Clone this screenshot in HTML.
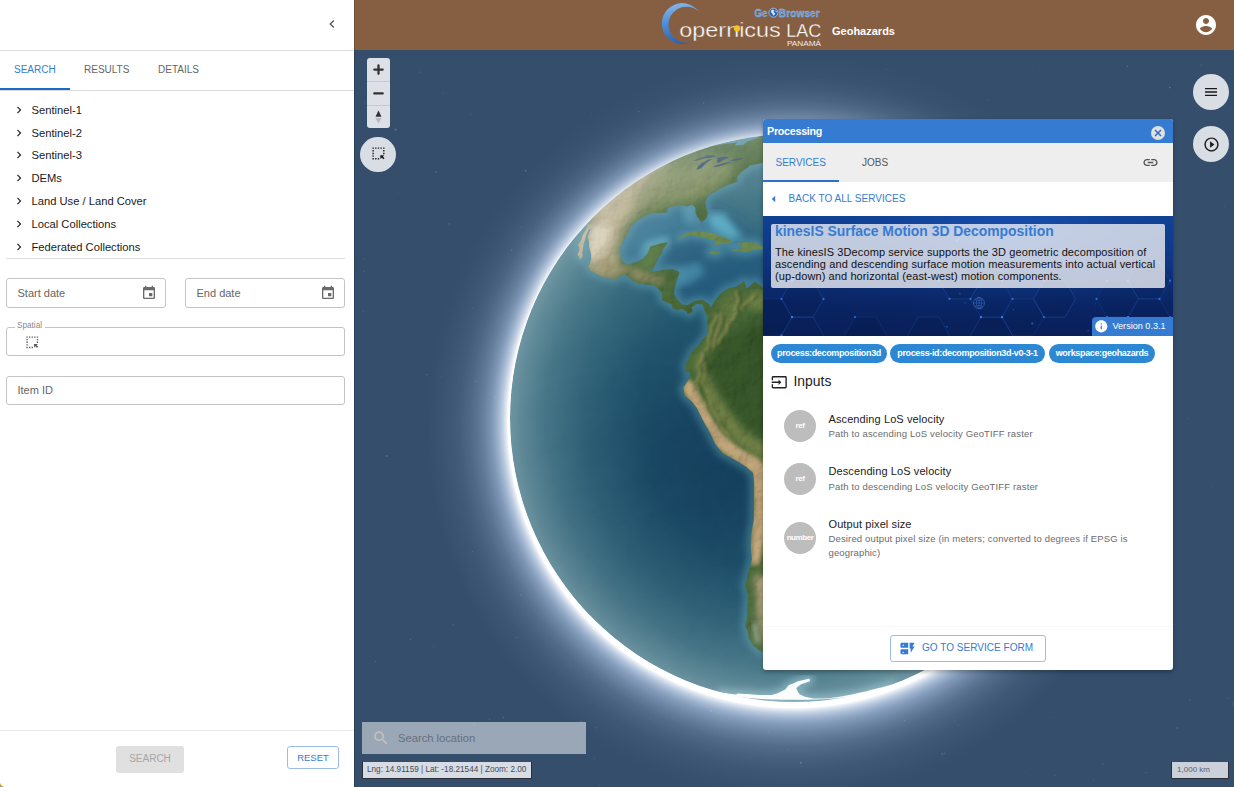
<!DOCTYPE html>
<html><head><meta charset="utf-8"><title>GeoBrowser</title>
<style>
*{box-sizing:border-box;margin:0;padding:0}
html,body{width:1234px;height:787px;overflow:hidden;background:#344e6c;font-family:"Liberation Sans",sans-serif;}
.abs{position:absolute}
#map{position:absolute;left:354px;top:49px;width:880px;height:738px;background:#344e6c;overflow:hidden}
#appbar{position:absolute;left:354px;top:0;width:880px;height:50px;background:#865e41}
#left{position:absolute;left:0;top:0;width:354px;height:787px;background:#fff;box-shadow:1px 0 0 rgba(0,0,0,.16)}
#left .hdr{position:absolute;left:0;top:0;width:353px;height:51px;border-bottom:1px solid #dedede}
.tabs{position:absolute;left:0;top:50px;width:354px;height:41px;border-bottom:1px solid #dadada}
.tab{position:absolute;top:0;height:39px;line-height:39px;font-size:10px;color:#666;white-space:nowrap}
.tab.sel{color:#367bd2}
.ind{position:absolute;left:0;top:38px;width:70px;height:2px;background:#1d69cb}
.row{position:absolute;left:0;width:353px;height:23px;font-size:11.2px;color:#1a1a1a;white-space:nowrap}
.row span{position:absolute;left:31.5px;top:0;line-height:23px}
.row svg{position:absolute;left:12px;top:4.5px}
.fld{position:absolute;border:1px solid #c4c4c4;border-radius:3px;background:#fff;font-size:11px;color:#666;white-space:nowrap}
.fld span{position:absolute;left:10.5px;top:0}
.btn{position:absolute;border-radius:3px;font-size:10px;text-align:center;white-space:nowrap}
.ctl{position:absolute;background:rgba(236,238,242,.9)}
.circ{position:absolute;width:36px;height:36px;border-radius:50%;background:#d9dde4}
#dlg{position:absolute;left:763px;top:119px;width:410px;height:551px;background:#fff;border-radius:3px;overflow:hidden;box-shadow:0 2px 4px rgba(0,0,0,.3)}
#dlg .bar{position:absolute;left:0;top:0;width:410px;height:24px;background:#367bd2}
#dlg .tabsbg{position:absolute;left:0;top:24px;width:410px;height:39px;background:#eeeeee}
.chip{position:absolute;top:225px;height:19px;line-height:19px;border-radius:10px;background:#2d88d3;color:#fff;font-size:9px;font-weight:bold;letter-spacing:-0.35px;text-align:center;white-space:nowrap}
.av{position:absolute;left:21px;width:32px;height:32px;border-radius:50%;background:#bdbdbd;color:#fff;font-size:8px;font-weight:bold;text-align:center;line-height:32px;letter-spacing:-0.45px}
.pri{position:absolute;left:65.5px;font-size:11px;color:#222;white-space:nowrap;letter-spacing:0.1px}
.sec{position:absolute;left:65.5px;font-size:9.5px;color:#6b6b6b;white-space:nowrap;letter-spacing:0.15px;line-height:14px}
</style></head><body>

<div id="map">
<svg class="abs" style="left:0;top:0" width="880" height="738" viewBox="0 0 880 738">
<defs>
<radialGradient id="glow" gradientUnits="userSpaceOnUse" cx="439.2" cy="373.5" r="369.0"><stop offset="0.7615" stop-color="#ffffff" stop-opacity="1"/><stop offset="0.7724" stop-color="#ffffff" stop-opacity="1"/><stop offset="0.7791" stop-color="#f4f8ff" stop-opacity="0.88"/><stop offset="0.7900" stop-color="#e2eeff" stop-opacity="0.72"/><stop offset="0.8022" stop-color="#d4e6ff" stop-opacity="0.57"/><stop offset="0.8184" stop-color="#c8e0ff" stop-opacity="0.405"/><stop offset="0.8374" stop-color="#c8e0ff" stop-opacity="0.275"/><stop offset="0.8564" stop-color="#c8e0ff" stop-opacity="0.185"/><stop offset="0.8780" stop-color="#c8e0ff" stop-opacity="0.115"/><stop offset="0.9051" stop-color="#c8e0ff" stop-opacity="0.062"/><stop offset="0.9377" stop-color="#c8e0ff" stop-opacity="0.028"/><stop offset="1.0000" stop-color="#c8e0ff" stop-opacity="0"/></radialGradient><radialGradient id="glow2" gradientUnits="userSpaceOnUse" cx="437" cy="389" r="364.0"><stop offset="0.7115" stop-color="#c8e0ff" stop-opacity="0.3"/><stop offset="0.7940" stop-color="#c8e0ff" stop-opacity="0.2"/><stop offset="0.8489" stop-color="#c8e0ff" stop-opacity="0.1"/><stop offset="0.9176" stop-color="#c8e0ff" stop-opacity="0.035"/><stop offset="1.0000" stop-color="#c8e0ff" stop-opacity="0"/></radialGradient>
<radialGradient id="ocean" gradientUnits="userSpaceOnUse" cx="380" cy="409" r="330">
<stop offset="0" stop-color="#0f3552"/>
<stop offset="0.2" stop-color="#123b58"/>
<stop offset="0.42" stop-color="#194a63"/>
<stop offset="0.62" stop-color="#245a6e"/>
<stop offset="0.8" stop-color="#33697a"/>
<stop offset="1" stop-color="#427684"/>
</radialGradient>
<radialGradient id="limb" gradientUnits="userSpaceOnUse" cx="446" cy="367" r="291.0">
<stop offset="0.55" stop-color="#cfdade" stop-opacity="0"/>
<stop offset="0.75" stop-color="#cfdade" stop-opacity=".07"/>
<stop offset="0.87" stop-color="#cfdade" stop-opacity=".16"/>
<stop offset="0.95" stop-color="#d3dde1" stop-opacity=".27"/>
<stop offset="1" stop-color="#d8e1e5" stop-opacity=".36"/>
</radialGradient>
<filter id="relief" x="0" y="0" width="100%" height="100%">
<feTurbulence type="fractalNoise" baseFrequency="0.055" numOctaves="4" seed="4" result="n"/>
<feDiffuseLighting in="n" surfaceScale="2.6" diffuseConstant="1.15" lighting-color="#ffffff" result="l"><feDistantLight azimuth="220" elevation="48"/></feDiffuseLighting>
<feComposite in="l" in2="SourceGraphic" operator="in"/>
</filter>
<filter id="relief2" x="0" y="0" width="100%" height="100%">
<feTurbulence type="fractalNoise" baseFrequency="0.02 0.035" numOctaves="3" seed="9" result="n"/>
<feDiffuseLighting in="n" surfaceScale="0.9" diffuseConstant="1.05" lighting-color="#ffffff" result="l"><feDistantLight azimuth="200" elevation="27"/></feDiffuseLighting>
<feComposite in="l" in2="SourceGraphic" operator="in"/>
</filter>
<clipPath id="gc"><circle cx="440" cy="369" r="284.0"/></clipPath>
<clipPath id="landclip"><path d="M267.0 133.2 L259.3 138.9 L251.9 145.0 L245.4 150.6 L239.0 156.5 L239.0 168.6 L236.1 171.9 L231.8 177.5 L233.6 177.2 L232.3 180.2 L229.2 185.2 L228.2 188.1 L227.3 191.3 L224.1 195.9 L224.7 197.5 L225.6 198.2 L225.3 202.0 L223.5 206.0 L224.8 207.1 L225.8 209.4 L226.0 210.4 L228.3 208.0 L228.8 205.0 L227.8 204.4 L228.3 202.2 L229.0 198.6 L229.5 195.3 L230.7 191.3 L231.5 187.9 L232.6 184.4 L234.9 180.3 L236.8 180.2 L235.0 184.3 L233.9 187.5 L234.5 190.3 L235.0 194.3 L235.2 198.2 L237.1 204.9 L237.3 209.4 L235.7 215.5 L234.0 216.9 L236.2 221.9 L242.1 224.5 L249.1 228.0 L255.8 229.6 L261.6 230.2 L267.8 226.4 L272.9 226.3 L279.1 232.1 L284.6 234.6 L294.0 235.7 L299.9 235.9 L303.5 238.5 L307.9 243.9 L308.0 250.9 L312.0 253.2 L317.2 254.9 L319.0 259.2 L322.7 261.1 L327.8 260.0 L332.2 262.5 L333.7 265.2 L339.0 263.0 L337.6 258.6 L342.5 254.7 L348.3 255.4 L349.8 259.3 L351.3 263.8 L354.0 267.8 L353.1 273.7 L354.5 283.2 L344.5 296.7 L337.1 303.3 L334.0 311.6 L331.6 314.9 L331.6 322.3 L336.9 323.9 L335.1 329.7 L329.3 338.3 L330.7 346.4 L337.9 352.4 L342.9 359.1 L348.7 371.0 L355.9 383.6 L361.3 394.9 L368.5 404.3 L382.2 411.6 L392.2 417.8 L399.1 424.0 L400.2 434.7 L400.1 445.3 L400.1 455.8 L399.9 470.3 L398.3 479.2 L396.8 487.9 L396.8 499.3 L397.9 510.4 L394.4 523.8 L392.8 530.5 L390.9 536.6 L394.4 546.5 L393.6 555.0 L392.9 560.5 L393.1 569.3 L390.7 576.4 L393.7 581.7 L394.7 589.4 L399.4 596.7 L405.5 602.0 L413.0 604.7 L420.6 607.3 L427.9 609.8 L434.6 606.7 L429.0 602.8 L423.1 598.6 L419.8 593.3 L424.6 585.7 L431.0 578.6 L423.6 573.6 L431.8 569.3 L433.7 560.5 L440.5 558.2 L433.5 551.2 L446.8 541.5 L457.4 540.6 L469.8 536.6 L474.5 529.0 L466.8 519.0 L478.9 520.6 L492.2 515.9 L501.4 505.0 L514.0 491.1 L523.1 479.8 L525.4 468.0 L538.5 459.4 L547.3 456.6 L555.9 453.9 L562.2 453.5 L568.8 445.3 L577.9 430.4 L581.0 421.3 L584.1 412.1 L586.5 402.9 L588.8 393.6 L597.7 381.7 L608.9 367.1 L610.3 358.6 L608.7 348.4 L599.8 343.1 L592.0 335.5 L584.0 332.2 L575.8 328.9 L560.0 325.1 L544.2 312.7 L535.3 312.1 L526.1 304.1 L522.8 294.6 L519.4 282.2 L510.0 275.7 L494.3 269.0 L478.6 265.5 L469.0 256.4 L456.3 250.4 L450.0 241.1 L437.5 242.8 L425.0 241.2 L412.6 240.3 L400.6 232.8 L392.4 239.8 L390.3 232.1 L382.2 238.0 L374.9 238.9 L366.8 244.5 L360.3 252.8 L356.9 258.8 L354.8 254.9 L348.6 250.8 L340.4 252.1 L333.8 256.0 L328.2 255.4 L325.7 252.9 L323.2 250.3 L319.9 245.1 L321.0 236.9 L323.7 228.6 L325.6 223.2 L319.3 219.9 L311.6 220.4 L303.8 222.0 L299.7 223.1 L297.5 221.9 L302.1 213.9 L304.2 208.8 L307.9 203.5 L309.3 199.6 L313.3 194.9 L312.4 193.2 L305.5 194.8 L296.6 197.6 L294.0 204.0 L290.5 208.7 L286.2 211.4 L280.5 213.4 L273.5 215.8 L268.1 212.4 L266.3 204.9 L266.0 199.5 L269.4 191.8 L274.8 183.1 L276.7 177.5 L282.3 172.1 L290.7 166.9 L298.6 163.7 L306.0 163.9 L312.9 163.2 L314.1 158.8 L320.7 157.2 L325.3 156.0 L331.4 156.5 L333.1 157.6 L338.2 155.4 L341.5 158.6 L341.4 163.2 L343.3 168.1 L345.9 171.0 L347.2 173.4 L352.0 169.9 L353.8 164.8 L352.4 159.1 L351.2 152.6 L354.7 146.2 L360.8 142.7 L368.5 138.3 L376.2 134.9 L383.7 132.4 L383.1 127.3 L388.0 122.6 L394.6 118.1 L395.1 116.5 L403.9 114.9 L412.8 112.7 L409.8 111.2 L413.9 108.0 L420.2 106.7 L426.4 105.5 L430.1 108.0 L440.4 105.5 L450.2 103.7 L453.8 101.9 L448.0 100.8 L442.3 100.8 L436.6 100.8 L434.9 98.2 L437.5 97.3 L427.8 97.0 L431.6 95.5 L436.8 95.4 L442.1 95.4 L447.4 95.4 L452.6 95.5 L457.6 94.8 L462.4 94.2 L466.1 93.1 L464.4 91.9 L457.2 90.0 L452.3 88.9 L447.5 88.0 L444.4 86.9 L437.7 85.9 L430.6 87.0 L424.0 86.9 L423.8 86.1 L419.6 86.0 L416.1 86.2 L412.6 86.5 L409.2 86.8 L405.8 87.2 L404.0 88.0 L402.2 89.5 L393.3 92.4 L391.3 94.1 L389.2 96.0 L384.9 96.2 L380.6 96.5 L383.2 93.7 L377.2 94.3 L374.1 94.6 L371.2 94.8 L367.7 95.4 L364.4 96.1 L361.2 96.8 L362.2 96.0 L365.5 94.9 L372.5 84.4 L381.4 82.4 L386.2 81.5 L391.0 80.6 L395.6 79.9 L401.2 79.1 L406.4 78.4 L403.6 78.8 L400.9 79.1 L398.1 79.5 L395.5 79.9 L392.8 80.3 L389.7 80.8 L386.6 81.4 L383.5 82.0 L380.5 82.6 L377.4 83.3 L374.4 83.9 L371.9 84.5 L369.4 85.1 L367.0 85.7 L364.7 86.3 L362.5 86.9 L360.3 87.5 L359.1 87.9 L358.0 88.2 L357.0 88.5 L356.1 88.8 L355.3 89.0 L354.6 89.2 L353.4 89.6 L352.2 90.0 L351.1 90.3 L350.1 90.6 L349.1 90.9 L348.3 91.2 L347.1 91.6 L346.0 92.0 L345.0 92.3 L344.1 92.7 L343.2 93.0 L342.4 93.2 L342.2 93.3 L342.0 93.4 L341.9 93.4 L341.9 93.4 L342.0 93.4 L342.1 93.4 L342.3 93.3 L342.6 93.2 L342.9 93.1 L343.3 92.9 L341.3 93.6 L339.3 94.4 L337.4 95.1 L335.6 95.8 L333.8 96.4 L332.2 97.1 L323.6 100.6 L315.2 104.4 L313.6 105.2 L312.2 105.9 L307.8 108.1 L303.5 110.3 L297.4 113.6 L291.6 116.9 L288.1 119.0 L284.9 121.0 L280.4 123.9 L276.1 126.7 L271.9 129.6 L267.8 132.5 L269.7 131.1 L271.8 129.7 L273.9 128.2 L276.1 126.7 L279.9 124.2 L283.8 121.7 L287.8 119.2 L292.5 116.4 L297.4 113.6 L297.0 113.8 L296.7 114.0 L296.5 114.1 L296.4 114.1 L296.4 114.2 L296.5 114.1 L294.2 115.4 L292.2 116.5 L289.4 118.2 L286.7 119.9 L283.2 122.0 L276.3 126.6 L271.2 130.1 L268.8 131.8Z M323.6 190.2 L329.0 185.9 L335.5 183.3 L344.7 182.2 L352.1 183.2 L359.7 184.3 L364.6 186.6 L371.3 188.8 L379.1 192.5 L374.4 194.3 L359.4 195.9 L362.7 191.9 L356.0 190.6 L349.5 188.4 L341.1 187.1 L334.8 186.1 L329.3 188.6Z M377.0 201.4 L382.6 202.1 L387.7 202.3 L392.2 203.6 L399.4 200.7 L408.2 199.9 L411.8 198.8 L404.9 196.6 L403.4 193.7 L393.7 193.2 L385.7 193.6 L383.3 194.7 L387.1 196.4 L388.0 199.8 L382.2 200.1Z M355.0 203.1 L362.3 202.0 L366.5 204.1 L361.9 205.5 L355.4 204.5Z M418.8 199.2 L427.6 199.5 L427.0 201.5 L418.7 201.7Z M451.2 240.6 L456.2 240.1 L456.2 244.0 L450.6 244.0Z"/></clipPath>
<filter id="b1" x="-10%" y="-10%" width="120%" height="120%"><feGaussianBlur stdDeviation="0.7"/></filter>
<filter id="b15" x="-10%" y="-10%" width="120%" height="120%"><feGaussianBlur stdDeviation="1.4"/></filter>
<filter id="b2" x="-10%" y="-10%" width="120%" height="120%"><feGaussianBlur stdDeviation="2"/></filter>
<filter id="b3" x="-10%" y="-10%" width="120%" height="120%"><feGaussianBlur stdDeviation="3.5"/></filter>
<filter id="b6" x="-10%" y="-10%" width="120%" height="120%"><feGaussianBlur stdDeviation="7"/></filter>
</defs>
<circle cx="398.1" cy="413.1" r="0.8" fill="#c9d6ea" fill-opacity="0.18"/><circle cx="752.4" cy="140.1" r="1.0" fill="#c9d6ea" fill-opacity="0.18"/><circle cx="540.3" cy="137.4" r="0.8" fill="#c9d6ea" fill-opacity="0.15"/><circle cx="79.8" cy="597.5" r="0.5" fill="#c9d6ea" fill-opacity="0.21"/><circle cx="348.6" cy="334.3" r="1.0" fill="#c9d6ea" fill-opacity="0.22"/><circle cx="548.4" cy="613.8" r="0.5" fill="#c9d6ea" fill-opacity="0.09"/><circle cx="167.4" cy="178.6" r="0.5" fill="#c9d6ea" fill-opacity="0.25"/><circle cx="287.1" cy="436.1" r="0.6" fill="#c9d6ea" fill-opacity="0.19"/><circle cx="563.5" cy="368.8" r="0.5" fill="#c9d6ea" fill-opacity="0.18"/><circle cx="244.8" cy="736.3" r="0.5" fill="#c9d6ea" fill-opacity="0.24"/><circle cx="277.4" cy="169.5" r="0.7" fill="#c9d6ea" fill-opacity="0.09"/><circle cx="495.6" cy="79.7" r="0.5" fill="#c9d6ea" fill-opacity="0.27"/><circle cx="340.1" cy="707.0" r="0.5" fill="#c9d6ea" fill-opacity="0.13"/><circle cx="815.8" cy="38.6" r="0.8" fill="#c9d6ea" fill-opacity="0.30"/><circle cx="349.7" cy="53.9" r="0.6" fill="#c9d6ea" fill-opacity="0.25"/><circle cx="237.4" cy="64.3" r="0.7" fill="#c9d6ea" fill-opacity="0.08"/><circle cx="360.8" cy="681.1" r="0.6" fill="#c9d6ea" fill-opacity="0.13"/><circle cx="88.9" cy="44.2" r="0.8" fill="#c9d6ea" fill-opacity="0.12"/><circle cx="492.2" cy="330.2" r="0.6" fill="#c9d6ea" fill-opacity="0.30"/><circle cx="677.2" cy="309.4" r="0.8" fill="#c9d6ea" fill-opacity="0.11"/><circle cx="370.3" cy="157.1" r="0.7" fill="#c9d6ea" fill-opacity="0.27"/><circle cx="857.9" cy="437.4" r="0.5" fill="#c9d6ea" fill-opacity="0.13"/><circle cx="347.0" cy="630.5" r="1.0" fill="#c9d6ea" fill-opacity="0.10"/><circle cx="870.6" cy="157.4" r="0.7" fill="#c9d6ea" fill-opacity="0.08"/><circle cx="537.1" cy="612.8" r="0.8" fill="#c9d6ea" fill-opacity="0.10"/><circle cx="79.3" cy="430.1" r="0.6" fill="#c9d6ea" fill-opacity="0.08"/><circle cx="324.4" cy="459.1" r="0.6" fill="#c9d6ea" fill-opacity="0.29"/><circle cx="425.7" cy="424.0" r="0.8" fill="#c9d6ea" fill-opacity="0.12"/><circle cx="135.6" cy="670.4" r="1.0" fill="#c9d6ea" fill-opacity="0.13"/><circle cx="167.0" cy="545.7" r="1.0" fill="#c9d6ea" fill-opacity="0.12"/><circle cx="836.1" cy="651.1" r="1.0" fill="#c9d6ea" fill-opacity="0.10"/><circle cx="41.7" cy="80.5" r="1.0" fill="#c9d6ea" fill-opacity="0.29"/><circle cx="209.8" cy="520.0" r="0.7" fill="#c9d6ea" fill-opacity="0.17"/><circle cx="796.2" cy="362.4" r="1.0" fill="#c9d6ea" fill-opacity="0.12"/><circle cx="633.9" cy="50.8" r="0.6" fill="#c9d6ea" fill-opacity="0.19"/><circle cx="575.1" cy="454.5" r="0.5" fill="#c9d6ea" fill-opacity="0.14"/><circle cx="807.3" cy="150.5" r="0.5" fill="#c9d6ea" fill-opacity="0.10"/><circle cx="362.1" cy="183.8" r="0.5" fill="#c9d6ea" fill-opacity="0.12"/><circle cx="324.5" cy="422.3" r="0.6" fill="#c9d6ea" fill-opacity="0.10"/><circle cx="121.8" cy="332.4" r="0.7" fill="#c9d6ea" fill-opacity="0.22"/><circle cx="608.3" cy="431.3" r="0.6" fill="#c9d6ea" fill-opacity="0.21"/><circle cx="812.8" cy="350.4" r="0.7" fill="#c9d6ea" fill-opacity="0.23"/><circle cx="847.2" cy="15.7" r="0.5" fill="#c9d6ea" fill-opacity="0.19"/><circle cx="642.8" cy="235.4" r="0.5" fill="#c9d6ea" fill-opacity="0.10"/><circle cx="480.6" cy="543.9" r="0.6" fill="#c9d6ea" fill-opacity="0.25"/><circle cx="805.2" cy="259.7" r="0.8" fill="#c9d6ea" fill-opacity="0.28"/><circle cx="766.6" cy="307.9" r="0.5" fill="#c9d6ea" fill-opacity="0.27"/><circle cx="504.1" cy="461.2" r="0.8" fill="#c9d6ea" fill-opacity="0.16"/><circle cx="11.0" cy="53.3" r="0.5" fill="#c9d6ea" fill-opacity="0.22"/><circle cx="874.1" cy="649.3" r="0.7" fill="#c9d6ea" fill-opacity="0.17"/><circle cx="646.8" cy="428.7" r="0.8" fill="#c9d6ea" fill-opacity="0.18"/><circle cx="476.3" cy="382.8" r="1.0" fill="#c9d6ea" fill-opacity="0.09"/><circle cx="529.1" cy="354.9" r="0.6" fill="#c9d6ea" fill-opacity="0.29"/><circle cx="99.3" cy="575.6" r="0.8" fill="#c9d6ea" fill-opacity="0.14"/><circle cx="10.0" cy="222.2" r="1.0" fill="#c9d6ea" fill-opacity="0.12"/><circle cx="149.3" cy="668.4" r="0.8" fill="#c9d6ea" fill-opacity="0.19"/><circle cx="212.5" cy="298.7" r="0.7" fill="#c9d6ea" fill-opacity="0.12"/><circle cx="379.2" cy="594.8" r="0.6" fill="#c9d6ea" fill-opacity="0.27"/><circle cx="338.3" cy="430.3" r="0.7" fill="#c9d6ea" fill-opacity="0.13"/><circle cx="118.4" cy="258.8" r="0.5" fill="#c9d6ea" fill-opacity="0.24"/><circle cx="836.0" cy="204.3" r="0.6" fill="#c9d6ea" fill-opacity="0.10"/><circle cx="414.8" cy="683.2" r="0.8" fill="#c9d6ea" fill-opacity="0.16"/><circle cx="457.6" cy="496.0" r="1.0" fill="#c9d6ea" fill-opacity="0.18"/><circle cx="65.7" cy="23.2" r="1.0" fill="#c9d6ea" fill-opacity="0.09"/><circle cx="623.6" cy="421.1" r="0.7" fill="#c9d6ea" fill-opacity="0.22"/><circle cx="496.4" cy="473.0" r="0.8" fill="#c9d6ea" fill-opacity="0.18"/><circle cx="21.8" cy="612.3" r="0.6" fill="#c9d6ea" fill-opacity="0.25"/><circle cx="701.2" cy="726.2" r="0.5" fill="#c9d6ea" fill-opacity="0.18"/><circle cx="554.4" cy="483.4" r="0.7" fill="#c9d6ea" fill-opacity="0.29"/><circle cx="602.4" cy="147.1" r="0.8" fill="#c9d6ea" fill-opacity="0.14"/><circle cx="628.5" cy="557.2" r="1.0" fill="#c9d6ea" fill-opacity="0.24"/><circle cx="157.6" cy="201.0" r="0.7" fill="#c9d6ea" fill-opacity="0.20"/><circle cx="833.2" cy="369.3" r="0.6" fill="#c9d6ea" fill-opacity="0.17"/><circle cx="696.9" cy="668.8" r="0.5" fill="#c9d6ea" fill-opacity="0.17"/><circle cx="785.5" cy="286.3" r="0.8" fill="#c9d6ea" fill-opacity="0.18"/><circle cx="550.5" cy="671.6" r="0.8" fill="#c9d6ea" fill-opacity="0.20"/><circle cx="574.4" cy="371.0" r="0.7" fill="#c9d6ea" fill-opacity="0.18"/><circle cx="573.2" cy="151.2" r="0.5" fill="#c9d6ea" fill-opacity="0.13"/><circle cx="792.0" cy="723.6" r="0.7" fill="#c9d6ea" fill-opacity="0.20"/><circle cx="695.9" cy="236.5" r="0.5" fill="#c9d6ea" fill-opacity="0.16"/><circle cx="72.8" cy="325.4" r="1.0" fill="#c9d6ea" fill-opacity="0.17"/><circle cx="242.2" cy="678.8" r="0.6" fill="#c9d6ea" fill-opacity="0.26"/><circle cx="56.4" cy="590.3" r="0.6" fill="#c9d6ea" fill-opacity="0.20"/><circle cx="604.2" cy="676.0" r="0.8" fill="#c9d6ea" fill-opacity="0.11"/><circle cx="454.5" cy="534.0" r="0.8" fill="#c9d6ea" fill-opacity="0.29"/><circle cx="433.5" cy="700.5" r="0.5" fill="#c9d6ea" fill-opacity="0.25"/><circle cx="386.7" cy="412.4" r="1.0" fill="#c9d6ea" fill-opacity="0.22"/><circle cx="460.0" cy="622.6" r="1.0" fill="#c9d6ea" fill-opacity="0.14"/><circle cx="590.7" cy="704.6" r="1.0" fill="#c9d6ea" fill-opacity="0.13"/><circle cx="748.7" cy="714.7" r="1.0" fill="#c9d6ea" fill-opacity="0.14"/><circle cx="437.9" cy="303.4" r="0.5" fill="#c9d6ea" fill-opacity="0.19"/><circle cx="532.6" cy="20.5" r="0.5" fill="#c9d6ea" fill-opacity="0.19"/><circle cx="352.5" cy="591.2" r="1.0" fill="#c9d6ea" fill-opacity="0.11"/><circle cx="82.0" cy="123.1" r="1.0" fill="#c9d6ea" fill-opacity="0.18"/><circle cx="810.3" cy="590.7" r="0.8" fill="#c9d6ea" fill-opacity="0.14"/><circle cx="416.4" cy="93.7" r="0.8" fill="#c9d6ea" fill-opacity="0.28"/><circle cx="823.4" cy="679.0" r="1.0" fill="#c9d6ea" fill-opacity="0.15"/><circle cx="168.5" cy="456.0" r="0.7" fill="#c9d6ea" fill-opacity="0.11"/><circle cx="685.8" cy="16.8" r="0.6" fill="#c9d6ea" fill-opacity="0.11"/><circle cx="10.4" cy="209.7" r="0.7" fill="#c9d6ea" fill-opacity="0.13"/><circle cx="439.0" cy="368.8" r="1.0" fill="#c9d6ea" fill-opacity="0.11"/><circle cx="449.2" cy="184.9" r="0.6" fill="#c9d6ea" fill-opacity="0.23"/><circle cx="773.3" cy="17.2" r="0.8" fill="#c9d6ea" fill-opacity="0.26"/><circle cx="541.9" cy="397.2" r="1.0" fill="#c9d6ea" fill-opacity="0.22"/><circle cx="466.1" cy="628.2" r="1.0" fill="#c9d6ea" fill-opacity="0.21"/><circle cx="120.1" cy="675.1" r="0.7" fill="#c9d6ea" fill-opacity="0.28"/><circle cx="278.0" cy="232.5" r="0.6" fill="#c9d6ea" fill-opacity="0.13"/><circle cx="878.6" cy="655.0" r="0.6" fill="#c9d6ea" fill-opacity="0.28"/><circle cx="116.6" cy="65.1" r="0.8" fill="#c9d6ea" fill-opacity="0.10"/><circle cx="732.3" cy="311.2" r="0.6" fill="#c9d6ea" fill-opacity="0.12"/><circle cx="552.6" cy="589.6" r="0.5" fill="#c9d6ea" fill-opacity="0.12"/><circle cx="600.5" cy="672.6" r="0.7" fill="#c9d6ea" fill-opacity="0.11"/><circle cx="445.0" cy="559.5" r="1.0" fill="#c9d6ea" fill-opacity="0.30"/><circle cx="733.0" cy="592.5" r="0.8" fill="#c9d6ea" fill-opacity="0.10"/><circle cx="32.9" cy="407.1" r="1.0" fill="#c9d6ea" fill-opacity="0.28"/><circle cx="423.5" cy="139.9" r="0.5" fill="#c9d6ea" fill-opacity="0.12"/><circle cx="739.4" cy="730.8" r="0.5" fill="#c9d6ea" fill-opacity="0.21"/><circle cx="118.3" cy="502.6" r="0.5" fill="#c9d6ea" fill-opacity="0.25"/><circle cx="287.6" cy="344.6" r="1.0" fill="#c9d6ea" fill-opacity="0.16"/><circle cx="184.9" cy="275.4" r="0.5" fill="#c9d6ea" fill-opacity="0.27"/><circle cx="159.5" cy="335.0" r="0.7" fill="#c9d6ea" fill-opacity="0.17"/><circle cx="171.7" cy="121.8" r="1.0" fill="#c9d6ea" fill-opacity="0.25"/><circle cx="284.9" cy="62.6" r="0.8" fill="#c9d6ea" fill-opacity="0.21"/><circle cx="168.0" cy="431.4" r="0.7" fill="#c9d6ea" fill-opacity="0.26"/><circle cx="227.3" cy="672.5" r="0.6" fill="#c9d6ea" fill-opacity="0.26"/><circle cx="357.0" cy="661.7" r="1.0" fill="#c9d6ea" fill-opacity="0.23"/><circle cx="675.2" cy="564.7" r="0.8" fill="#c9d6ea" fill-opacity="0.13"/><circle cx="162.6" cy="588.4" r="0.7" fill="#c9d6ea" fill-opacity="0.18"/><circle cx="9.3" cy="262.5" r="1.0" fill="#c9d6ea" fill-opacity="0.09"/><circle cx="240.2" cy="709.5" r="0.7" fill="#c9d6ea" fill-opacity="0.15"/><circle cx="580.6" cy="420.3" r="1.0" fill="#c9d6ea" fill-opacity="0.10"/><circle cx="452.9" cy="367.2" r="0.6" fill="#c9d6ea" fill-opacity="0.23"/><circle cx="670.3" cy="723.3" r="0.5" fill="#c9d6ea" fill-opacity="0.11"/><circle cx="95.1" cy="174.9" r="0.8" fill="#c9d6ea" fill-opacity="0.17"/><circle cx="44.4" cy="144.2" r="0.8" fill="#c9d6ea" fill-opacity="0.08"/><circle cx="227.5" cy="203.5" r="0.7" fill="#c9d6ea" fill-opacity="0.20"/><circle cx="446.9" cy="713.7" r="1.0" fill="#c9d6ea" fill-opacity="0.27"/><circle cx="87.7" cy="327.9" r="0.5" fill="#c9d6ea" fill-opacity="0.20"/><circle cx="588.2" cy="705.0" r="0.8" fill="#c9d6ea" fill-opacity="0.28"/><circle cx="140.7" cy="348.2" r="0.6" fill="#c9d6ea" fill-opacity="0.27"/>
<circle cx="437" cy="389" r="364.0" fill="url(#glow2)"/><circle cx="439.2" cy="373.5" r="369.0" fill="url(#glow)"/>
<g clip-path="url(#gc)">
<circle cx="440" cy="369" r="284.0" fill="url(#ocean)"/>
<!-- darker deep pacific patch -->
<g style="mix-blend-mode:soft-light" opacity=".35"><circle cx="440" cy="369" r="284.0" fill="#fff" filter="url(#relief2)"/></g>
<!-- caribbean / gulf brighter water -->
<path d="M280.0 167.4 L286.1 165.4 L292.5 163.4 L299.0 161.6 L305.6 159.8 L312.5 158.0 L319.5 156.4 L326.6 154.8 L333.9 153.2 L341.3 151.8 L348.8 150.4 L354.6 153.3 L360.8 156.3 L367.3 159.5 L374.1 162.9 L383.1 170.5 L392.9 178.7 L401.9 180.6 L411.2 182.5 L420.5 184.6 L430.0 186.8 L439.6 189.2 L449.3 191.6 L451.4 199.0 L453.5 206.6 L455.7 214.4 L457.9 222.4 L460.1 230.6 L462.4 239.0 L452.8 240.4 L443.2 241.9 L433.5 243.5 L423.9 245.1 L414.2 246.9 L404.5 248.7 L394.9 250.5 L385.3 252.5 L375.7 254.5 L366.3 256.6 L356.9 258.8 L346.6 258.1 L336.6 257.5 L326.7 257.0 L317.1 256.6 L309.8 249.1 L303.0 241.8 L296.6 234.8 L290.6 228.1 L283.5 226.3 L276.8 224.6 L270.4 223.0 L264.2 221.5 L258.4 220.1 L260.7 212.8 L263.1 205.7 L265.6 198.8 L268.2 192.1 L271.0 185.6 L273.9 179.3 L276.9 173.2Z" fill="#1d5a86" fill-opacity=".5" filter="url(#b6)"/>
<path d="M279.6 174.2 L286.9 171.5 L294.4 168.8 L302.1 166.3 L309.9 163.8 L316.4 162.6 L323.1 161.4 L329.9 160.3 L336.8 159.3 L336.6 167.0 L336.6 175.1 L325.0 183.0 L313.3 191.3 L301.8 199.9 L290.5 208.7 L281.3 210.5 L272.5 212.3 L270.2 204.0 L268.4 196.1 L272.0 188.5 L275.8 181.2Z" fill="#3f8ba8" fill-opacity=".45" filter="url(#b6)"/>
<!-- shallow shelves -->
<path d="M267.0 133.2 L259.3 138.9 L251.9 145.0 L245.4 150.6 L239.0 156.5 L239.0 168.6 L236.1 171.9 L231.8 177.5 L233.6 177.2 L232.3 180.2 L229.2 185.2 L228.2 188.1 L227.3 191.3 L224.1 195.9 L224.7 197.5 L225.6 198.2 L225.3 202.0 L223.5 206.0 L224.8 207.1 L225.8 209.4 L226.0 210.4 L228.3 208.0 L228.8 205.0 L227.8 204.4 L228.3 202.2 L229.0 198.6 L229.5 195.3 L230.7 191.3 L231.5 187.9 L232.6 184.4 L234.9 180.3 L236.8 180.2 L235.0 184.3 L233.9 187.5 L234.5 190.3 L235.0 194.3 L235.2 198.2 L237.1 204.9 L237.3 209.4 L235.7 215.5 L234.0 216.9 L236.2 221.9 L242.1 224.5 L249.1 228.0 L255.8 229.6 L261.6 230.2 L267.8 226.4 L272.9 226.3 L279.1 232.1 L284.6 234.6 L294.0 235.7 L299.9 235.9 L303.5 238.5 L307.9 243.9 L308.0 250.9 L312.0 253.2 L317.2 254.9 L319.0 259.2 L322.7 261.1 L327.8 260.0 L332.2 262.5 L333.7 265.2 L339.0 263.0 L337.6 258.6 L342.5 254.7 L348.3 255.4 L349.8 259.3 L351.3 263.8 L354.0 267.8 L353.1 273.7 L354.5 283.2 L344.5 296.7 L337.1 303.3 L334.0 311.6 L331.6 314.9 L331.6 322.3 L336.9 323.9 L335.1 329.7 L329.3 338.3 L330.7 346.4 L337.9 352.4 L342.9 359.1 L348.7 371.0 L355.9 383.6 L361.3 394.9 L368.5 404.3 L382.2 411.6 L392.2 417.8 L399.1 424.0 L400.2 434.7 L400.1 445.3 L400.1 455.8 L399.9 470.3 L398.3 479.2 L396.8 487.9 L396.8 499.3 L397.9 510.4 L394.4 523.8 L392.8 530.5 L390.9 536.6 L394.4 546.5 L393.6 555.0 L392.9 560.5 L393.1 569.3 L390.7 576.4 L393.7 581.7 L394.7 589.4 L399.4 596.7 L405.5 602.0 L413.0 604.7 L420.6 607.3 L427.9 609.8 L434.6 606.7 L429.0 602.8 L423.1 598.6 L419.8 593.3 L424.6 585.7 L431.0 578.6 L423.6 573.6 L431.8 569.3 L433.7 560.5 L440.5 558.2 L433.5 551.2 L446.8 541.5 L457.4 540.6 L469.8 536.6 L474.5 529.0 L466.8 519.0 L478.9 520.6 L492.2 515.9 L501.4 505.0 L514.0 491.1 L523.1 479.8 L525.4 468.0 L538.5 459.4 L547.3 456.6 L555.9 453.9 L562.2 453.5 L568.8 445.3 L577.9 430.4 L581.0 421.3 L584.1 412.1 L586.5 402.9 L588.8 393.6 L597.7 381.7 L608.9 367.1 L610.3 358.6 L608.7 348.4 L599.8 343.1 L592.0 335.5 L584.0 332.2 L575.8 328.9 L560.0 325.1 L544.2 312.7 L535.3 312.1 L526.1 304.1 L522.8 294.6 L519.4 282.2 L510.0 275.7 L494.3 269.0 L478.6 265.5 L469.0 256.4 L456.3 250.4 L450.0 241.1 L437.5 242.8 L425.0 241.2 L412.6 240.3 L400.6 232.8 L392.4 239.8 L390.3 232.1 L382.2 238.0 L374.9 238.9 L366.8 244.5 L360.3 252.8 L356.9 258.8 L354.8 254.9 L348.6 250.8 L340.4 252.1 L333.8 256.0 L328.2 255.4 L325.7 252.9 L323.2 250.3 L319.9 245.1 L321.0 236.9 L323.7 228.6 L325.6 223.2 L319.3 219.9 L311.6 220.4 L303.8 222.0 L299.7 223.1 L297.5 221.9 L302.1 213.9 L304.2 208.8 L307.9 203.5 L309.3 199.6 L313.3 194.9 L312.4 193.2 L305.5 194.8 L296.6 197.6 L294.0 204.0 L290.5 208.7 L286.2 211.4 L280.5 213.4 L273.5 215.8 L268.1 212.4 L266.3 204.9 L266.0 199.5 L269.4 191.8 L274.8 183.1 L276.7 177.5 L282.3 172.1 L290.7 166.9 L298.6 163.7 L306.0 163.9 L312.9 163.2 L314.1 158.8 L320.7 157.2 L325.3 156.0 L331.4 156.5 L333.1 157.6 L338.2 155.4 L341.5 158.6 L341.4 163.2 L343.3 168.1 L345.9 171.0 L347.2 173.4 L352.0 169.9 L353.8 164.8 L352.4 159.1 L351.2 152.6 L354.7 146.2 L360.8 142.7 L368.5 138.3 L376.2 134.9 L383.7 132.4 L383.1 127.3 L388.0 122.6 L394.6 118.1 L395.1 116.5 L403.9 114.9 L412.8 112.7 L409.8 111.2 L413.9 108.0 L420.2 106.7 L426.4 105.5 L430.1 108.0 L440.4 105.5 L450.2 103.7 L453.8 101.9 L448.0 100.8 L442.3 100.8 L436.6 100.8 L434.9 98.2 L437.5 97.3 L427.8 97.0 L431.6 95.5 L436.8 95.4 L442.1 95.4 L447.4 95.4 L452.6 95.5 L457.6 94.8 L462.4 94.2 L466.1 93.1 L464.4 91.9 L457.2 90.0 L452.3 88.9 L447.5 88.0 L444.4 86.9 L437.7 85.9 L430.6 87.0 L424.0 86.9 L423.8 86.1 L419.6 86.0 L416.1 86.2 L412.6 86.5 L409.2 86.8 L405.8 87.2 L404.0 88.0 L402.2 89.5 L393.3 92.4 L391.3 94.1 L389.2 96.0 L384.9 96.2 L380.6 96.5 L383.2 93.7 L377.2 94.3 L374.1 94.6 L371.2 94.8 L367.7 95.4 L364.4 96.1 L361.2 96.8 L362.2 96.0 L365.5 94.9 L372.5 84.4 L381.4 82.4 L386.2 81.5 L391.0 80.6 L395.6 79.9 L401.2 79.1 L406.4 78.4 L403.6 78.8 L400.9 79.1 L398.1 79.5 L395.5 79.9 L392.8 80.3 L389.7 80.8 L386.6 81.4 L383.5 82.0 L380.5 82.6 L377.4 83.3 L374.4 83.9 L371.9 84.5 L369.4 85.1 L367.0 85.7 L364.7 86.3 L362.5 86.9 L360.3 87.5 L359.1 87.9 L358.0 88.2 L357.0 88.5 L356.1 88.8 L355.3 89.0 L354.6 89.2 L353.4 89.6 L352.2 90.0 L351.1 90.3 L350.1 90.6 L349.1 90.9 L348.3 91.2 L347.1 91.6 L346.0 92.0 L345.0 92.3 L344.1 92.7 L343.2 93.0 L342.4 93.2 L342.2 93.3 L342.0 93.4 L341.9 93.4 L341.9 93.4 L342.0 93.4 L342.1 93.4 L342.3 93.3 L342.6 93.2 L342.9 93.1 L343.3 92.9 L341.3 93.6 L339.3 94.4 L337.4 95.1 L335.6 95.8 L333.8 96.4 L332.2 97.1 L323.6 100.6 L315.2 104.4 L313.6 105.2 L312.2 105.9 L307.8 108.1 L303.5 110.3 L297.4 113.6 L291.6 116.9 L288.1 119.0 L284.9 121.0 L280.4 123.9 L276.1 126.7 L271.9 129.6 L267.8 132.5 L269.7 131.1 L271.8 129.7 L273.9 128.2 L276.1 126.7 L279.9 124.2 L283.8 121.7 L287.8 119.2 L292.5 116.4 L297.4 113.6 L297.0 113.8 L296.7 114.0 L296.5 114.1 L296.4 114.1 L296.4 114.2 L296.5 114.1 L294.2 115.4 L292.2 116.5 L289.4 118.2 L286.7 119.9 L283.2 122.0 L276.3 126.6 L271.2 130.1 L268.8 131.8Z M323.6 190.2 L329.0 185.9 L335.5 183.3 L344.7 182.2 L352.1 183.2 L359.7 184.3 L364.6 186.6 L371.3 188.8 L379.1 192.5 L374.4 194.3 L359.4 195.9 L362.7 191.9 L356.0 190.6 L349.5 188.4 L341.1 187.1 L334.8 186.1 L329.3 188.6Z M377.0 201.4 L382.6 202.1 L387.7 202.3 L392.2 203.6 L399.4 200.7 L408.2 199.9 L411.8 198.8 L404.9 196.6 L403.4 193.7 L393.7 193.2 L385.7 193.6 L383.3 194.7 L387.1 196.4 L388.0 199.8 L382.2 200.1Z M355.0 203.1 L362.3 202.0 L366.5 204.1 L361.9 205.5 L355.4 204.5Z M418.8 199.2 L427.6 199.5 L427.0 201.5 L418.7 201.7Z M451.2 240.6 L456.2 240.1 L456.2 244.0 L450.6 244.0Z" fill="none" stroke="#5fa5b8" stroke-opacity=".5" stroke-width="8" stroke-linejoin="round" filter="url(#b3)"/>
<path d="M290.8 193.1 L298.5 190.9 L306.5 188.8 L314.6 186.7 L314.6 195.6 L305.4 199.3 L296.5 203.1 L285.9 209.6 L288.2 201.2Z" fill="#62a9bf" fill-opacity=".7" filter="url(#b3)"/>
<path d="M356.3 164.6 L368.9 163.3 L375.1 171.1 L381.9 179.4 L389.1 188.2 L375.1 189.0 L367.6 185.0 L360.3 181.1 L353.8 175.2Z" fill="#63c0d6" fill-opacity=".75" filter="url(#b3)"/>
<path d="M324.8 218.2 L334.5 215.8 L344.2 213.6 L351.3 223.3 L335.9 235.3 L322.1 236.8 L323.4 227.4Z" fill="#4f9bb8" fill-opacity=".6" filter="url(#b3)"/>
<path d="M329.1 156.8 L340.5 155.1 L340.6 161.6 L340.8 168.4 L343.6 176.3 L331.7 175.7 L330.0 169.9 L328.5 164.3Z" fill="#62a9bf" fill-opacity=".55" filter="url(#b3)"/>
<!-- land -->
<g filter="url(#b1)">
<path d="M267.0 133.2 L259.3 138.9 L251.9 145.0 L245.4 150.6 L239.0 156.5 L239.0 168.6 L236.1 171.9 L231.8 177.5 L233.6 177.2 L232.3 180.2 L229.2 185.2 L228.2 188.1 L227.3 191.3 L224.1 195.9 L224.7 197.5 L225.6 198.2 L225.3 202.0 L223.5 206.0 L224.8 207.1 L225.8 209.4 L226.0 210.4 L228.3 208.0 L228.8 205.0 L227.8 204.4 L228.3 202.2 L229.0 198.6 L229.5 195.3 L230.7 191.3 L231.5 187.9 L232.6 184.4 L234.9 180.3 L236.8 180.2 L235.0 184.3 L233.9 187.5 L234.5 190.3 L235.0 194.3 L235.2 198.2 L237.1 204.9 L237.3 209.4 L235.7 215.5 L234.0 216.9 L236.2 221.9 L242.1 224.5 L249.1 228.0 L255.8 229.6 L261.6 230.2 L267.8 226.4 L272.9 226.3 L279.1 232.1 L284.6 234.6 L294.0 235.7 L299.9 235.9 L303.5 238.5 L307.9 243.9 L308.0 250.9 L312.0 253.2 L317.2 254.9 L319.0 259.2 L322.7 261.1 L327.8 260.0 L332.2 262.5 L333.7 265.2 L339.0 263.0 L337.6 258.6 L342.5 254.7 L348.3 255.4 L349.8 259.3 L351.3 263.8 L354.0 267.8 L353.1 273.7 L354.5 283.2 L344.5 296.7 L337.1 303.3 L334.0 311.6 L331.6 314.9 L331.6 322.3 L336.9 323.9 L335.1 329.7 L329.3 338.3 L330.7 346.4 L337.9 352.4 L342.9 359.1 L348.7 371.0 L355.9 383.6 L361.3 394.9 L368.5 404.3 L382.2 411.6 L392.2 417.8 L399.1 424.0 L400.2 434.7 L400.1 445.3 L400.1 455.8 L399.9 470.3 L398.3 479.2 L396.8 487.9 L396.8 499.3 L397.9 510.4 L394.4 523.8 L392.8 530.5 L390.9 536.6 L394.4 546.5 L393.6 555.0 L392.9 560.5 L393.1 569.3 L390.7 576.4 L393.7 581.7 L394.7 589.4 L399.4 596.7 L405.5 602.0 L413.0 604.7 L420.6 607.3 L427.9 609.8 L434.6 606.7 L429.0 602.8 L423.1 598.6 L419.8 593.3 L424.6 585.7 L431.0 578.6 L423.6 573.6 L431.8 569.3 L433.7 560.5 L440.5 558.2 L433.5 551.2 L446.8 541.5 L457.4 540.6 L469.8 536.6 L474.5 529.0 L466.8 519.0 L478.9 520.6 L492.2 515.9 L501.4 505.0 L514.0 491.1 L523.1 479.8 L525.4 468.0 L538.5 459.4 L547.3 456.6 L555.9 453.9 L562.2 453.5 L568.8 445.3 L577.9 430.4 L581.0 421.3 L584.1 412.1 L586.5 402.9 L588.8 393.6 L597.7 381.7 L608.9 367.1 L610.3 358.6 L608.7 348.4 L599.8 343.1 L592.0 335.5 L584.0 332.2 L575.8 328.9 L560.0 325.1 L544.2 312.7 L535.3 312.1 L526.1 304.1 L522.8 294.6 L519.4 282.2 L510.0 275.7 L494.3 269.0 L478.6 265.5 L469.0 256.4 L456.3 250.4 L450.0 241.1 L437.5 242.8 L425.0 241.2 L412.6 240.3 L400.6 232.8 L392.4 239.8 L390.3 232.1 L382.2 238.0 L374.9 238.9 L366.8 244.5 L360.3 252.8 L356.9 258.8 L354.8 254.9 L348.6 250.8 L340.4 252.1 L333.8 256.0 L328.2 255.4 L325.7 252.9 L323.2 250.3 L319.9 245.1 L321.0 236.9 L323.7 228.6 L325.6 223.2 L319.3 219.9 L311.6 220.4 L303.8 222.0 L299.7 223.1 L297.5 221.9 L302.1 213.9 L304.2 208.8 L307.9 203.5 L309.3 199.6 L313.3 194.9 L312.4 193.2 L305.5 194.8 L296.6 197.6 L294.0 204.0 L290.5 208.7 L286.2 211.4 L280.5 213.4 L273.5 215.8 L268.1 212.4 L266.3 204.9 L266.0 199.5 L269.4 191.8 L274.8 183.1 L276.7 177.5 L282.3 172.1 L290.7 166.9 L298.6 163.7 L306.0 163.9 L312.9 163.2 L314.1 158.8 L320.7 157.2 L325.3 156.0 L331.4 156.5 L333.1 157.6 L338.2 155.4 L341.5 158.6 L341.4 163.2 L343.3 168.1 L345.9 171.0 L347.2 173.4 L352.0 169.9 L353.8 164.8 L352.4 159.1 L351.2 152.6 L354.7 146.2 L360.8 142.7 L368.5 138.3 L376.2 134.9 L383.7 132.4 L383.1 127.3 L388.0 122.6 L394.6 118.1 L395.1 116.5 L403.9 114.9 L412.8 112.7 L409.8 111.2 L413.9 108.0 L420.2 106.7 L426.4 105.5 L430.1 108.0 L440.4 105.5 L450.2 103.7 L453.8 101.9 L448.0 100.8 L442.3 100.8 L436.6 100.8 L434.9 98.2 L437.5 97.3 L427.8 97.0 L431.6 95.5 L436.8 95.4 L442.1 95.4 L447.4 95.4 L452.6 95.5 L457.6 94.8 L462.4 94.2 L466.1 93.1 L464.4 91.9 L457.2 90.0 L452.3 88.9 L447.5 88.0 L444.4 86.9 L437.7 85.9 L430.6 87.0 L424.0 86.9 L423.8 86.1 L419.6 86.0 L416.1 86.2 L412.6 86.5 L409.2 86.8 L405.8 87.2 L404.0 88.0 L402.2 89.5 L393.3 92.4 L391.3 94.1 L389.2 96.0 L384.9 96.2 L380.6 96.5 L383.2 93.7 L377.2 94.3 L374.1 94.6 L371.2 94.8 L367.7 95.4 L364.4 96.1 L361.2 96.8 L362.2 96.0 L365.5 94.9 L372.5 84.4 L381.4 82.4 L386.2 81.5 L391.0 80.6 L395.6 79.9 L401.2 79.1 L406.4 78.4 L403.6 78.8 L400.9 79.1 L398.1 79.5 L395.5 79.9 L392.8 80.3 L389.7 80.8 L386.6 81.4 L383.5 82.0 L380.5 82.6 L377.4 83.3 L374.4 83.9 L371.9 84.5 L369.4 85.1 L367.0 85.7 L364.7 86.3 L362.5 86.9 L360.3 87.5 L359.1 87.9 L358.0 88.2 L357.0 88.5 L356.1 88.8 L355.3 89.0 L354.6 89.2 L353.4 89.6 L352.2 90.0 L351.1 90.3 L350.1 90.6 L349.1 90.9 L348.3 91.2 L347.1 91.6 L346.0 92.0 L345.0 92.3 L344.1 92.7 L343.2 93.0 L342.4 93.2 L342.2 93.3 L342.0 93.4 L341.9 93.4 L341.9 93.4 L342.0 93.4 L342.1 93.4 L342.3 93.3 L342.6 93.2 L342.9 93.1 L343.3 92.9 L341.3 93.6 L339.3 94.4 L337.4 95.1 L335.6 95.8 L333.8 96.4 L332.2 97.1 L323.6 100.6 L315.2 104.4 L313.6 105.2 L312.2 105.9 L307.8 108.1 L303.5 110.3 L297.4 113.6 L291.6 116.9 L288.1 119.0 L284.9 121.0 L280.4 123.9 L276.1 126.7 L271.9 129.6 L267.8 132.5 L269.7 131.1 L271.8 129.7 L273.9 128.2 L276.1 126.7 L279.9 124.2 L283.8 121.7 L287.8 119.2 L292.5 116.4 L297.4 113.6 L297.0 113.8 L296.7 114.0 L296.5 114.1 L296.4 114.1 L296.4 114.2 L296.5 114.1 L294.2 115.4 L292.2 116.5 L289.4 118.2 L286.7 119.9 L283.2 122.0 L276.3 126.6 L271.2 130.1 L268.8 131.8Z" fill="#4b6b39"/>
<path d="M323.6 190.2 L329.0 185.9 L335.5 183.3 L344.7 182.2 L352.1 183.2 L359.7 184.3 L364.6 186.6 L371.3 188.8 L379.1 192.5 L374.4 194.3 L359.4 195.9 L362.7 191.9 L356.0 190.6 L349.5 188.4 L341.1 187.1 L334.8 186.1 L329.3 188.6Z M377.0 201.4 L382.6 202.1 L387.7 202.3 L392.2 203.6 L399.4 200.7 L408.2 199.9 L411.8 198.8 L404.9 196.6 L403.4 193.7 L393.7 193.2 L385.7 193.6 L383.3 194.7 L387.1 196.4 L388.0 199.8 L382.2 200.1Z M355.0 203.1 L362.3 202.0 L366.5 204.1 L361.9 205.5 L355.4 204.5Z M418.8 199.2 L427.6 199.5 L427.0 201.5 L418.7 201.7Z M451.2 240.6 L456.2 240.1 L456.2 244.0 L450.6 244.0Z" fill="#6c8a4c"/>
<g clip-path="url(#landclip)">
  <!-- amazon darker -->
  <path d="M349.3 295.1 L359.1 289.6 L369.1 284.2 L379.2 278.9 L389.3 273.6 L399.4 268.5 L409.9 268.2 L420.5 268.0 L431.1 267.9 L441.7 267.9 L452.3 268.0 L462.9 268.1 L473.5 273.3 L484.2 278.7 L494.7 284.1 L505.3 289.6 L515.7 295.3 L526.0 301.0 L533.7 310.8 L541.3 320.6 L548.7 330.5 L555.9 340.5 L550.8 349.7 L545.6 358.9 L540.3 368.3 L534.9 377.6 L529.5 387.0 L524.0 396.4 L513.8 400.3 L503.5 404.3 L493.1 408.3 L482.8 412.4 L472.4 416.5 L462.1 420.7 L452.3 416.8 L442.5 412.9 L432.5 409.1 L422.5 405.3 L412.5 401.5 L402.9 392.0 L393.3 382.5 L383.7 373.0 L374.1 363.6 L365.6 353.2 L357.2 342.8 L348.9 332.6 L348.9 323.1 L348.9 313.7 L349.1 304.4Z" fill="#37592c" filter="url(#b6)"/>
  <path d="M272.5 129.2 L266.4 133.5 L260.4 138.1 L254.6 142.8 L248.8 147.6 L243.1 152.7 L237.5 157.9 L239.7 167.8 L236.1 171.6 L232.8 175.6 L229.7 179.8 L230.2 180.8 L231.2 182.0 L227.8 188.3 L224.8 195.0 L224.3 200.5 L224.3 206.2 L224.9 212.3 L229.3 213.3 L234.1 214.4 L236.5 224.0 L242.5 225.5 L249.0 227.1 L254.6 226.8 L260.5 226.6 L261.5 219.4 L262.7 212.3 L263.1 205.7 L263.6 199.3 L264.4 193.2 L267.5 185.9 L270.8 179.0 L274.2 172.3 L280.3 164.1 L286.5 156.3 L288.0 151.1 L289.7 146.3 L291.7 141.7 L294.0 137.8 L296.4 134.0 L299.0 130.4 L301.8 127.1 L304.7 123.9 L307.8 121.0 L311.0 118.3 L314.3 115.7 L314.4 114.9 L314.9 114.2 L315.7 113.6 L313.2 105.4 L314.6 104.7 L311.7 106.1 L309.0 107.5 L306.4 108.8 L303.9 110.1 L301.5 111.4 L299.2 112.6 L292.5 116.4 L285.7 120.5 L279.1 124.7Z" fill="#c6b58f" filter="url(#b6)"/>
  <path d="M233.9 178.3 L236.7 177.6 L239.8 176.9 L242.9 176.1 L246.3 175.3 L250.0 174.6 L253.3 176.1 L257.2 177.7 L256.0 184.7 L255.3 192.0 L249.7 201.4 L244.2 211.0 L240.0 210.4 L236.0 209.8 L235.1 203.9 L234.7 198.3 L234.8 192.9 L232.8 190.8 L231.2 188.9 L229.9 187.1 L231.8 182.6Z" fill="#dfd2b3" filter="url(#b3)"/>
  <path d="M233.0 178.9 L234.6 178.8 L236.4 178.8 L234.5 183.3 L232.8 188.1 L231.4 193.0 L230.2 198.1 L229.4 203.4 L228.8 208.9 L223.5 212.9 L223.0 206.8 L223.1 201.1 L223.7 195.6 L226.6 189.8 L229.7 184.3Z" fill="#c6b18a" filter="url(#b1)"/>
  <path d="M321.2 114.1 L325.5 112.7 L330.0 111.4 L334.7 110.1 L339.5 108.8 L344.4 107.6 L349.4 106.5 L352.8 106.9 L356.6 107.4 L360.6 108.1 L365.0 108.9 L369.7 109.7 L374.8 110.7 L380.0 114.5 L386.1 118.8 L379.9 124.0 L373.6 129.7 L367.2 135.7 L360.5 142.1 L350.1 146.8 L339.6 151.7 L332.8 152.7 L326.2 153.8 L319.7 154.9 L313.4 156.2 L306.7 158.4 L300.1 160.6 L293.7 163.0 L287.4 165.4 L288.6 160.2 L290.0 155.3 L291.6 150.6 L293.3 146.1 L295.3 141.8 L297.3 137.7 L299.6 133.9 L302.0 130.3 L306.7 125.8 L311.4 121.6 L316.3 117.7Z" fill="#8a9563" fill-opacity=".9" filter="url(#b6)"/>
  <path d="M308.3 119.8 L311.9 118.4 L315.7 117.0 L319.7 115.7 L323.7 114.4 L320.6 117.5 L317.6 120.7 L314.8 124.2 L312.0 128.0 L309.5 132.0 L304.5 137.3 L299.6 143.0 L294.8 149.0 L290.0 155.3 L281.4 162.2 L272.8 169.4 L272.2 163.5 L272.3 158.0 L275.7 152.8 L279.2 147.8 L282.9 143.0 L286.8 138.5 L290.7 134.3 L295.0 130.3 L299.3 126.6 L303.8 123.1Z" fill="#a39f70" fill-opacity=".8" filter="url(#b6)"/>
  <path d="M238.1 219.2 L243.6 221.8 L249.7 224.6 L254.8 226.1 L260.2 227.6 L266.8 225.7 L273.5 223.8 L281.0 229.7 L289.6 233.3 L299.4 232.8 L306.4 236.0 L310.3 227.7 L298.2 225.9 L287.4 221.2 L277.1 218.3 L271.1 217.2 L265.4 216.2 L257.5 211.5 L252.9 209.5 L248.7 207.6Z" fill="#9b8f62" fill-opacity=".85" filter="url(#b3)"/>
  <path d="M288.6 200.0 L296.4 197.8 L304.5 195.7 L312.7 193.6 L309.4 202.1 L306.2 210.8 L296.6 222.1 L286.3 216.6 L287.3 208.2Z" fill="#58793f" filter="url(#b3)"/>
  <path d="M346.2 298.4 L355.6 285.6 L359.3 270.4 L366.1 255.3 L382.0 240.2 L387.8 245.6 L384.1 260.2 L377.4 275.3 L367.7 291.0 L358.2 303.8 L348.9 316.8 L342.9 326.6 L336.9 320.7 L340.0 308.1Z" fill="#7d8c4c" fill-opacity=".45" filter="url(#b3)"/>
  <path d="M387.4 254.2 L400.2 242.3 L412.6 242.8 L425.0 243.5 L434.4 244.5 L443.8 245.7 L450.1 253.2 L440.6 256.1 L431.1 259.0 L418.5 260.7 L405.9 262.4 L396.6 258.3Z" fill="#84934f" fill-opacity=".6" filter="url(#b3)"/>
  <path d="M354.9 300.9 L357.0 297.7 L358.1 294.6 L358.0 291.5 L357.8 288.5 L358.6 285.4 L360.7 282.2 L360.3 279.3 L361.0 276.2 L362.9 273.1 L364.6 270.0 L365.2 267.1 L364.7 264.1 M362.4 297.4 L362.9 294.3 L362.7 291.3 L363.0 288.2 L364.6 285.0 L367.0 281.9 L366.8 278.9 L368.6 276.3 L370.0 273.7 L370.2 271.2 L369.5 268.8 L369.0 266.3 L370.8 263.8 M367.4 294.1 L367.7 291.5 L369.0 288.9 L371.6 286.2 L374.3 283.5 L376.2 280.9 L376.3 278.4 L376.3 276.4 L377.4 274.3 L379.6 272.2 L381.9 270.2 L383.1 268.1 L382.9 266.2 L384.6 264.6 L385.4 263.1 L384.9 261.6 L384.2 260.2 L384.5 258.7 L385.1 257.2 L386.0 254.7 L387.2 252.1 L387.4 249.6 L386.4 247.2 L385.0 244.8 L385.9 242.3 M390.0 260.0 L391.2 258.7 L391.4 257.6 L391.7 256.4 L393.2 255.2 L395.7 253.9 L396.2 252.7 L398.6 251.8 L400.5 250.9 L401.2 250.0 L401.0 249.1 L401.1 248.3 L403.5 247.3 M351.4 304.2 L351.5 307.3 L350.2 310.5 L348.5 313.7 L347.5 316.9 L347.7 320.1 L349.1 323.1 L348.9 325.8 L347.5 328.5 L346.0 331.2 L345.6 333.9 L346.3 336.5 L346.9 339.1 L346.7 341.8 L347.1 344.4 L348.7 347.0 L351.1 349.5 L352.9 352.1 L353.9 354.7 L354.9 357.4 L354.8 360.0 L354.8 362.7 L355.9 365.4 L358.1 367.9 L358.8 370.6 L361.7 373.2 L363.8 375.8 L364.7 378.4 L365.0 381.1 L366.1 383.7 L370.3 386.3 L372.1 388.4 L373.4 390.5 L375.6 392.6 L379.1 394.6 L383.1 396.7 L384.0 398.8 L387.9 400.3 L391.4 401.8 L393.8 403.4 L395.2 405.0 L396.8 406.6 L400.6 408.1 M353.5 313.5 L353.2 316.6 L353.9 319.7 L354.6 322.8 L354.2 326.0 L352.7 329.3 L350.9 332.5 L352.5 335.6 L354.9 338.7 L356.8 341.8 L357.4 345.0 L357.2 348.2 L359.3 351.3 L359.3 354.5 L359.9 357.7 L361.9 360.8 L364.5 363.9 L366.6 367.1 L367.7 370.3 L368.5 373.2 L369.3 376.2 L371.2 379.2 L374.3 382.1 L377.4 385.0 L378.3 388.0 " fill="none" stroke="#2f4522" stroke-opacity=".45" stroke-width="2.6" stroke-linecap="round" stroke-linejoin="round" filter="url(#b15)"/>
  <path d="M351.6 301.1 L353.7 297.9 L354.7 294.8 L354.6 291.7 L354.5 288.7 L355.3 285.6 L357.4 282.4 L356.9 279.5 L357.7 276.4 L359.5 273.3 L361.3 270.2 L361.9 267.2 L361.4 264.3 M359.1 297.6 L359.6 294.5 L359.4 291.4 L359.7 288.4 L361.3 285.2 L363.7 282.1 L363.5 279.1 L365.2 276.5 L366.7 273.9 L366.9 271.4 L366.2 269.0 L365.7 266.5 L367.4 264.0 M364.1 294.2 L364.3 291.7 L365.6 289.1 L368.2 286.4 L370.9 283.7 L372.8 281.1 L372.9 278.6 L372.9 276.6 L374.0 274.5 L376.2 272.4 L378.5 270.3 L379.7 268.3 L379.5 266.3 L381.2 264.7 L382.0 263.2 L381.5 261.8 L380.8 260.4 L381.1 258.9 L381.7 257.4 L382.7 254.8 L383.8 252.3 L384.0 249.8 L383.0 247.4 L381.7 245.0 L382.5 242.5 M386.6 260.1 L387.8 258.9 L388.0 257.7 L388.3 256.5 L389.8 255.3 L392.3 254.0 L392.8 252.9 L395.2 251.9 L397.1 251.0 L397.8 250.1 L397.6 249.2 L397.7 248.4 L400.0 247.4 M348.1 304.4 L348.1 307.5 L346.9 310.7 L345.2 313.9 L344.2 317.1 L344.4 320.3 L345.8 323.3 L345.5 326.0 L344.2 328.7 L342.7 331.4 L342.3 334.1 L343.0 336.7 L343.6 339.3 L343.4 341.9 L343.8 344.6 L345.4 347.2 L347.7 349.7 L349.6 352.3 L350.6 354.9 L351.5 357.5 L351.5 360.2 L351.5 362.9 L352.6 365.5 L354.8 368.1 L355.5 370.7 L358.4 373.3 L360.5 375.9 L361.3 378.5 L361.7 381.2 L362.7 383.9 L367.0 386.4 L368.7 388.5 L370.1 390.6 L372.3 392.7 L375.8 394.7 L379.7 396.7 L380.6 398.9 L384.5 400.4 L388.1 401.9 L390.4 403.5 L391.8 405.0 L393.4 406.6 L397.2 408.1 M350.2 313.6 L349.8 316.8 L350.6 319.9 L351.3 323.0 L350.9 326.2 L349.4 329.4 L347.6 332.7 L349.2 335.8 L351.5 338.9 L353.4 341.9 L354.0 345.1 L353.8 348.3 L355.9 351.4 L355.9 354.6 L356.6 357.8 L358.5 361.0 L361.1 364.1 L363.2 367.2 L364.3 370.4 L365.1 373.4 L365.9 376.3 L367.9 379.3 L370.9 382.2 L374.1 385.1 L374.9 388.1 " fill="none" stroke="#a8a060" stroke-opacity=".6" stroke-width="2.6" stroke-linecap="round" stroke-linejoin="round" filter="url(#b15)"/>
  <path d="M334.0 329.1 L328.2 340.2 L337.4 355.6 L346.9 371.1 L354.7 383.6 L361.5 397.5 L371.9 405.5 L382.3 413.5 L397.9 424.1 L398.5 435.6 L399.1 447.0 L399.7 458.2 L398.9 467.3 L398.1 476.2 L397.4 485.0 L396.8 493.7 L396.6 504.9 L396.4 515.8 L405.2 515.8 L407.7 504.8 L410.4 493.6 L413.1 484.0 L416.0 474.1 L419.1 464.1 L421.4 451.9 L423.8 439.5 L419.9 430.1 L416.0 420.7 L403.4 408.1 L394.0 403.4 L384.6 398.8 L370.0 386.3 L360.3 373.8 L351.8 358.0 L344.3 345.6 L339.3 334.5Z" fill="#c4a77c" filter="url(#b2)"/>
  <path d="M345.9 326.5 L349.0 335.8 L352.1 345.2 L358.5 357.7 L365.0 370.4 L373.1 381.4 L381.3 392.4 L390.7 398.6 L400.2 404.9 L412.7 411.1 L425.3 427.0 L434.5 426.9 L428.3 415.8 L421.9 404.6 L406.0 391.9 L396.5 385.6 L387.0 379.4 L380.5 369.8 L374.0 360.4 L367.6 350.9 L361.2 341.6 L357.2 332.2 L353.2 322.9Z" fill="#7d8a4b" fill-opacity=".8" filter="url(#b3)"/>
  <path d="M400.2 526.4 L407.7 526.4 L415.2 526.3 L424.4 534.0 L433.2 541.5 L442.8 551.2 L438.2 560.5 L433.9 567.2 L429.9 573.6 L428.2 579.8 L426.6 585.7 L424.2 591.4 L422.1 596.9 L416.7 596.9 L411.2 596.8 L409.6 591.4 L408.0 585.7 L406.4 579.7 L404.8 573.6 L404.2 567.1 L403.6 560.5 L403.2 553.6 L402.7 546.4 L401.4 536.6Z" fill="#b5a27c" filter="url(#b3)"/>
  <path d="M398.2 573.5 L401.5 573.5 L402.8 580.4 L404.3 587.0 L405.7 593.2 L402.0 593.2 L400.7 586.9 L399.4 580.4Z" fill="#e6ebee" fill-opacity=".55" filter="url(#b2)"/>
</g>
<path d="M338.1 112.3 L346.1 109.3 L353.6 106.3 L359.7 106.2 L362.0 107.5 L355.5 109.0 L349.7 109.5 L342.6 111.5Z M342.5 120.7 L347.1 119.2 L351.9 114.2 L358.5 109.9 L354.2 110.4 L347.9 114.0 L343.9 117.7Z M361.7 109.0 L370.3 107.5 L375.7 108.2 L369.4 111.0 L364.3 114.0 L362.7 112.0 L363.7 109.9Z M358.7 118.0 L365.6 117.2 L376.8 113.5 L377.2 112.8 L369.1 114.2 L361.3 116.7Z M375.0 112.2 L383.5 111.2 L388.7 109.8 L388.5 108.8 L380.4 110.3Z" fill="#34506e"/>
</g>
<g style="mix-blend-mode:multiply" opacity=".55"><path d="M267.0 133.2 L259.3 138.9 L251.9 145.0 L245.4 150.6 L239.0 156.5 L239.0 168.6 L236.1 171.9 L231.8 177.5 L233.6 177.2 L232.3 180.2 L229.2 185.2 L228.2 188.1 L227.3 191.3 L224.1 195.9 L224.7 197.5 L225.6 198.2 L225.3 202.0 L223.5 206.0 L224.8 207.1 L225.8 209.4 L226.0 210.4 L228.3 208.0 L228.8 205.0 L227.8 204.4 L228.3 202.2 L229.0 198.6 L229.5 195.3 L230.7 191.3 L231.5 187.9 L232.6 184.4 L234.9 180.3 L236.8 180.2 L235.0 184.3 L233.9 187.5 L234.5 190.3 L235.0 194.3 L235.2 198.2 L237.1 204.9 L237.3 209.4 L235.7 215.5 L234.0 216.9 L236.2 221.9 L242.1 224.5 L249.1 228.0 L255.8 229.6 L261.6 230.2 L267.8 226.4 L272.9 226.3 L279.1 232.1 L284.6 234.6 L294.0 235.7 L299.9 235.9 L303.5 238.5 L307.9 243.9 L308.0 250.9 L312.0 253.2 L317.2 254.9 L319.0 259.2 L322.7 261.1 L327.8 260.0 L332.2 262.5 L333.7 265.2 L339.0 263.0 L337.6 258.6 L342.5 254.7 L348.3 255.4 L349.8 259.3 L351.3 263.8 L354.0 267.8 L353.1 273.7 L354.5 283.2 L344.5 296.7 L337.1 303.3 L334.0 311.6 L331.6 314.9 L331.6 322.3 L336.9 323.9 L335.1 329.7 L329.3 338.3 L330.7 346.4 L337.9 352.4 L342.9 359.1 L348.7 371.0 L355.9 383.6 L361.3 394.9 L368.5 404.3 L382.2 411.6 L392.2 417.8 L399.1 424.0 L400.2 434.7 L400.1 445.3 L400.1 455.8 L399.9 470.3 L398.3 479.2 L396.8 487.9 L396.8 499.3 L397.9 510.4 L394.4 523.8 L392.8 530.5 L390.9 536.6 L394.4 546.5 L393.6 555.0 L392.9 560.5 L393.1 569.3 L390.7 576.4 L393.7 581.7 L394.7 589.4 L399.4 596.7 L405.5 602.0 L413.0 604.7 L420.6 607.3 L427.9 609.8 L434.6 606.7 L429.0 602.8 L423.1 598.6 L419.8 593.3 L424.6 585.7 L431.0 578.6 L423.6 573.6 L431.8 569.3 L433.7 560.5 L440.5 558.2 L433.5 551.2 L446.8 541.5 L457.4 540.6 L469.8 536.6 L474.5 529.0 L466.8 519.0 L478.9 520.6 L492.2 515.9 L501.4 505.0 L514.0 491.1 L523.1 479.8 L525.4 468.0 L538.5 459.4 L547.3 456.6 L555.9 453.9 L562.2 453.5 L568.8 445.3 L577.9 430.4 L581.0 421.3 L584.1 412.1 L586.5 402.9 L588.8 393.6 L597.7 381.7 L608.9 367.1 L610.3 358.6 L608.7 348.4 L599.8 343.1 L592.0 335.5 L584.0 332.2 L575.8 328.9 L560.0 325.1 L544.2 312.7 L535.3 312.1 L526.1 304.1 L522.8 294.6 L519.4 282.2 L510.0 275.7 L494.3 269.0 L478.6 265.5 L469.0 256.4 L456.3 250.4 L450.0 241.1 L437.5 242.8 L425.0 241.2 L412.6 240.3 L400.6 232.8 L392.4 239.8 L390.3 232.1 L382.2 238.0 L374.9 238.9 L366.8 244.5 L360.3 252.8 L356.9 258.8 L354.8 254.9 L348.6 250.8 L340.4 252.1 L333.8 256.0 L328.2 255.4 L325.7 252.9 L323.2 250.3 L319.9 245.1 L321.0 236.9 L323.7 228.6 L325.6 223.2 L319.3 219.9 L311.6 220.4 L303.8 222.0 L299.7 223.1 L297.5 221.9 L302.1 213.9 L304.2 208.8 L307.9 203.5 L309.3 199.6 L313.3 194.9 L312.4 193.2 L305.5 194.8 L296.6 197.6 L294.0 204.0 L290.5 208.7 L286.2 211.4 L280.5 213.4 L273.5 215.8 L268.1 212.4 L266.3 204.9 L266.0 199.5 L269.4 191.8 L274.8 183.1 L276.7 177.5 L282.3 172.1 L290.7 166.9 L298.6 163.7 L306.0 163.9 L312.9 163.2 L314.1 158.8 L320.7 157.2 L325.3 156.0 L331.4 156.5 L333.1 157.6 L338.2 155.4 L341.5 158.6 L341.4 163.2 L343.3 168.1 L345.9 171.0 L347.2 173.4 L352.0 169.9 L353.8 164.8 L352.4 159.1 L351.2 152.6 L354.7 146.2 L360.8 142.7 L368.5 138.3 L376.2 134.9 L383.7 132.4 L383.1 127.3 L388.0 122.6 L394.6 118.1 L395.1 116.5 L403.9 114.9 L412.8 112.7 L409.8 111.2 L413.9 108.0 L420.2 106.7 L426.4 105.5 L430.1 108.0 L440.4 105.5 L450.2 103.7 L453.8 101.9 L448.0 100.8 L442.3 100.8 L436.6 100.8 L434.9 98.2 L437.5 97.3 L427.8 97.0 L431.6 95.5 L436.8 95.4 L442.1 95.4 L447.4 95.4 L452.6 95.5 L457.6 94.8 L462.4 94.2 L466.1 93.1 L464.4 91.9 L457.2 90.0 L452.3 88.9 L447.5 88.0 L444.4 86.9 L437.7 85.9 L430.6 87.0 L424.0 86.9 L423.8 86.1 L419.6 86.0 L416.1 86.2 L412.6 86.5 L409.2 86.8 L405.8 87.2 L404.0 88.0 L402.2 89.5 L393.3 92.4 L391.3 94.1 L389.2 96.0 L384.9 96.2 L380.6 96.5 L383.2 93.7 L377.2 94.3 L374.1 94.6 L371.2 94.8 L367.7 95.4 L364.4 96.1 L361.2 96.8 L362.2 96.0 L365.5 94.9 L372.5 84.4 L381.4 82.4 L386.2 81.5 L391.0 80.6 L395.6 79.9 L401.2 79.1 L406.4 78.4 L403.6 78.8 L400.9 79.1 L398.1 79.5 L395.5 79.9 L392.8 80.3 L389.7 80.8 L386.6 81.4 L383.5 82.0 L380.5 82.6 L377.4 83.3 L374.4 83.9 L371.9 84.5 L369.4 85.1 L367.0 85.7 L364.7 86.3 L362.5 86.9 L360.3 87.5 L359.1 87.9 L358.0 88.2 L357.0 88.5 L356.1 88.8 L355.3 89.0 L354.6 89.2 L353.4 89.6 L352.2 90.0 L351.1 90.3 L350.1 90.6 L349.1 90.9 L348.3 91.2 L347.1 91.6 L346.0 92.0 L345.0 92.3 L344.1 92.7 L343.2 93.0 L342.4 93.2 L342.2 93.3 L342.0 93.4 L341.9 93.4 L341.9 93.4 L342.0 93.4 L342.1 93.4 L342.3 93.3 L342.6 93.2 L342.9 93.1 L343.3 92.9 L341.3 93.6 L339.3 94.4 L337.4 95.1 L335.6 95.8 L333.8 96.4 L332.2 97.1 L323.6 100.6 L315.2 104.4 L313.6 105.2 L312.2 105.9 L307.8 108.1 L303.5 110.3 L297.4 113.6 L291.6 116.9 L288.1 119.0 L284.9 121.0 L280.4 123.9 L276.1 126.7 L271.9 129.6 L267.8 132.5 L269.7 131.1 L271.8 129.7 L273.9 128.2 L276.1 126.7 L279.9 124.2 L283.8 121.7 L287.8 119.2 L292.5 116.4 L297.4 113.6 L297.0 113.8 L296.7 114.0 L296.5 114.1 L296.4 114.1 L296.4 114.2 L296.5 114.1 L294.2 115.4 L292.2 116.5 L289.4 118.2 L286.7 119.9 L283.2 122.0 L276.3 126.6 L271.2 130.1 L268.8 131.8Z M323.6 190.2 L329.0 185.9 L335.5 183.3 L344.7 182.2 L352.1 183.2 L359.7 184.3 L364.6 186.6 L371.3 188.8 L379.1 192.5 L374.4 194.3 L359.4 195.9 L362.7 191.9 L356.0 190.6 L349.5 188.4 L341.1 187.1 L334.8 186.1 L329.3 188.6Z M377.0 201.4 L382.6 202.1 L387.7 202.3 L392.2 203.6 L399.4 200.7 L408.2 199.9 L411.8 198.8 L404.9 196.6 L403.4 193.7 L393.7 193.2 L385.7 193.6 L383.3 194.7 L387.1 196.4 L388.0 199.8 L382.2 200.1Z M355.0 203.1 L362.3 202.0 L366.5 204.1 L361.9 205.5 L355.4 204.5Z M418.8 199.2 L427.6 199.5 L427.0 201.5 L418.7 201.7Z M451.2 240.6 L456.2 240.1 L456.2 244.0 L450.6 244.0Z" fill="#fff" filter="url(#relief)"/></g>
<!-- antarctica -->
<path d="M385.4 656.4 L384.5 656.2 L383.8 656.1 L383.2 655.9 L382.6 655.8 L382.1 655.7 L381.7 655.6 L381.3 655.6 L380.1 655.3 L378.9 655.1 L377.8 654.8 L376.8 654.6 L375.9 654.4 L375.0 654.2 L374.2 654.0 L372.6 653.6 L371.0 653.3 L369.6 652.9 L368.2 652.6 L366.9 652.2 L366.4 652.1 L366.1 652.0 L365.8 651.9 L365.6 651.9 L367.7 643.6 L368.2 643.7 L368.9 643.8 L369.6 643.9 L370.4 644.0 L371.4 644.1 L373.3 644.4 L375.3 644.7 L377.3 645.0 L379.4 645.3 L381.6 645.6 L382.1 645.4 L382.7 645.1 L383.5 644.8 L384.5 644.5 L387.3 644.7 L390.2 644.9 L393.2 645.1 L396.0 645.3 L398.8 645.5 L401.7 645.7 L404.7 645.9 L407.6 646.1 L410.8 646.0 L414.1 646.0 L417.4 646.0 L420.4 645.2 L423.8 644.2 L427.2 642.5 L431.3 640.6 L434.6 636.3 L439.1 634.4 L443.9 632.3 L449.6 631.0 L455.5 629.6 L456.0 632.2 L447.1 635.3 L442.3 639.0 L443.9 643.0 L445.9 645.6 L448.6 646.8 L450.9 647.8 L453.3 648.3 L455.5 648.7 L457.4 649.1 L459.2 649.5 L461.3 649.5 L463.4 649.6 L465.4 649.6 L467.3 649.6 L469.1 649.6 L470.8 649.6 L473.7 649.3 L476.7 649.0 L479.6 648.6 L482.6 648.2 L485.6 647.8 L489.6 647.1 L493.7 646.3 L497.8 645.5 L502.0 644.6 L506.3 643.6 L511.5 642.4 L516.6 641.1 L521.8 639.7 L524.6 639.1 L527.3 638.4 L529.9 637.8 L532.4 637.1 L533.9 636.7 L535.3 636.4 L536.6 636.0 L537.7 635.7 L541.6 643.3 L542.5 643.0 L543.2 642.7 L544.0 642.4 L544.6 642.2 L545.0 642.0 L545.4 641.9 L545.6 641.8 L545.7 641.8 L545.7 641.8 L546.1 641.6 L546.5 641.4 L546.7 641.4 L546.8 641.3 L546.8 641.3 L547.3 641.1 L547.6 641.0 L547.7 641.0 L547.7 641.0 L547.6 641.0 L547.3 641.1 L543.9 642.4 L540.5 643.7 L536.9 645.0 L533.3 646.2 L530.4 647.2 L527.4 648.2 L524.3 649.1 L521.1 650.0 L517.9 650.9 L516.4 651.4 L514.7 651.8 L512.8 652.3 L510.8 652.8 L508.6 653.4 L505.7 654.1 L502.6 654.7 L499.5 655.4 L496.2 656.1 L492.9 656.7 L489.4 657.3 L485.8 657.9 L482.1 658.5 L478.3 659.0 L474.5 659.5 L470.3 659.9 L466.2 660.3 L462.0 660.7 L457.8 661.0 L453.5 661.2 L449.3 661.4 L445.0 661.5 L440.8 661.5 L436.7 661.5 L432.6 661.4 L428.4 661.3 L424.1 661.1 L419.9 660.8 L415.6 660.5 L411.2 660.1 L407.3 659.7 L403.5 659.2 L399.8 658.7 L396.2 658.2 L392.7 657.7 L389.9 657.2 L387.1 656.7 L384.6 656.2 L382.3 655.8 L380.1 655.3 L377.9 654.9 L375.9 654.4 L374.0 654.0 L372.3 653.6 L370.8 653.2 L369.7 653.0 L368.9 652.7 L368.1 652.6 L367.6 652.4 L367.2 652.3 L380.1 655.3 L392.5 657.6 L391.2 657.4 L390.0 657.2 L388.9 657.0 L387.9 656.8 L387.0 656.7 L386.1 656.5 L385.4 656.4 L386.4 656.6 L387.4 656.8 L388.6 657.0 L389.7 657.2 L391.0 657.4 L392.3 657.6 L393.7 657.8 L395.1 658.0 L396.5 658.3 L398.0 658.5 L399.6 658.7 L401.2 658.9 L402.9 659.2 L404.6 659.4 L406.3 659.6 L408.1 659.8 L410.0 660.0 L411.8 660.2 L413.7 660.3 L415.6 660.5 L417.6 660.7 L419.6 660.8 L421.6 660.9 L423.6 661.1 L425.7 661.2 L427.8 661.3 L429.9 661.3 L432.0 661.4 L434.1 661.5 L436.2 661.5 L438.3 661.5 L440.4 661.5 L442.5 661.5 L444.7 661.5 L446.8 661.4 L448.9 661.4 L451.0 661.3 L453.1 661.2 L455.1 661.1 L457.2 661.0 L459.2 660.9 L461.2 660.8 L463.2 660.6 L465.1 660.4 L467.0 660.3 L468.9 660.1 L470.8 659.9 L472.6 659.7 L474.4 659.5 L476.1 659.3 L477.8 659.1 L479.4 658.9 L481.0 658.6 L482.6 658.4 L484.1 658.2 L485.5 658.0 L486.9 657.7 L488.2 657.5 L489.5 657.3 L490.7 657.1 L491.9 656.9 L493.0 656.7 L494.0 656.5 L495.0 656.3 L495.9 656.1 L496.8 656.0 L497.6 655.8 L498.3 655.6 L499.0 655.5 L499.6 655.4 L500.1 655.3 L500.5 655.2 L500.9 655.1 L501.2 655.0 L501.5 655.0 L501.6 655.0 L501.7 654.9 L501.8 654.9 L501.7 654.9 L501.6 655.0 L501.4 655.0 L501.1 655.1 L500.8 655.1 L500.4 655.2 L499.9 655.3 L499.4 655.4 L498.7 655.6 L498.0 655.7 L497.3 655.9 L496.4 656.0 L493.9 647.8 L492.9 648.0 L491.9 648.2 L490.8 648.3 L489.7 648.5 L488.4 648.6 L487.1 648.8 L485.8 648.9 L484.4 649.1 L482.9 649.2 L481.3 649.4 L479.7 649.5 L478.1 649.6 L476.4 649.7 L474.6 649.8 L472.8 650.0 L471.0 650.1 L469.1 650.2 L467.1 650.2 L465.2 650.3 L463.2 650.4 L461.1 650.5 L459.1 650.5 L457.0 650.6 L454.8 650.7 L452.7 650.7 L450.5 650.7 L448.4 650.8 L446.2 650.8 L444.0 650.8 L441.8 650.8 L439.6 650.8 L437.4 650.8 L435.2 650.8 L433.0 650.8 L430.8 650.8 L428.6 650.7 L426.4 650.7 L424.3 650.6 L422.2 650.6 L420.1 650.5 L418.1 650.5 L416.0 650.4 L414.0 650.3 L412.1 650.2 L410.2 650.1 L408.3 650.0 L406.5 649.9 L404.7 649.8 L402.9 649.7 L401.2 649.6 L399.6 649.4 L398.0 649.3 L396.5 649.2 L395.1 649.0 L393.7 648.9 L392.3 648.7 L391.1 648.6 L389.9 648.4 L388.7 648.3 L387.7 648.1 L386.7 647.9 L385.7 647.8 L383.2 656.0 L382.4 655.8 L381.7 655.6 L381.0 655.5 L380.4 655.4 L379.9 655.3 L379.4 655.2 L379.1 655.1 L378.7 655.0 L378.5 655.0 L378.4 654.9 L378.3 654.9 L378.2 654.9 L378.3 654.9 L378.4 655.0 L378.6 655.0 L378.9 655.1 L379.2 655.1 L379.6 655.2 L380.1 655.3 L380.7 655.4 L381.3 655.6 L382.0 655.7 L382.7 655.9 L383.5 656.0 L384.4 656.2Z" fill="none" stroke="#7fb7c4" stroke-opacity=".7" stroke-width="8" filter="url(#b3)"/>
<circle cx="440" cy="369" r="284.0" fill="url(#limb)"/>
<path d="M385.4 656.4 L384.5 656.2 L383.8 656.1 L383.2 655.9 L382.6 655.8 L382.1 655.7 L381.7 655.6 L381.3 655.6 L380.1 655.3 L378.9 655.1 L377.8 654.8 L376.8 654.6 L375.9 654.4 L375.0 654.2 L374.2 654.0 L372.6 653.6 L371.0 653.3 L369.6 652.9 L368.2 652.6 L366.9 652.2 L366.4 652.1 L366.1 652.0 L365.8 651.9 L365.6 651.9 L367.7 643.6 L368.2 643.7 L368.9 643.8 L369.6 643.9 L370.4 644.0 L371.4 644.1 L373.3 644.4 L375.3 644.7 L377.3 645.0 L379.4 645.3 L381.6 645.6 L382.1 645.4 L382.7 645.1 L383.5 644.8 L384.5 644.5 L387.3 644.7 L390.2 644.9 L393.2 645.1 L396.0 645.3 L398.8 645.5 L401.7 645.7 L404.7 645.9 L407.6 646.1 L410.8 646.0 L414.1 646.0 L417.4 646.0 L420.4 645.2 L423.8 644.2 L427.2 642.5 L431.3 640.6 L434.6 636.3 L439.1 634.4 L443.9 632.3 L449.6 631.0 L455.5 629.6 L456.0 632.2 L447.1 635.3 L442.3 639.0 L443.9 643.0 L445.9 645.6 L448.6 646.8 L450.9 647.8 L453.3 648.3 L455.5 648.7 L457.4 649.1 L459.2 649.5 L461.3 649.5 L463.4 649.6 L465.4 649.6 L467.3 649.6 L469.1 649.6 L470.8 649.6 L473.7 649.3 L476.7 649.0 L479.6 648.6 L482.6 648.2 L485.6 647.8 L489.6 647.1 L493.7 646.3 L497.8 645.5 L502.0 644.6 L506.3 643.6 L511.5 642.4 L516.6 641.1 L521.8 639.7 L524.6 639.1 L527.3 638.4 L529.9 637.8 L532.4 637.1 L533.9 636.7 L535.3 636.4 L536.6 636.0 L537.7 635.7 L541.6 643.3 L542.5 643.0 L543.2 642.7 L544.0 642.4 L544.6 642.2 L545.0 642.0 L545.4 641.9 L545.6 641.8 L545.7 641.8 L545.7 641.8 L546.1 641.6 L546.5 641.4 L546.7 641.4 L546.8 641.3 L546.8 641.3 L547.3 641.1 L547.6 641.0 L547.7 641.0 L547.7 641.0 L547.6 641.0 L547.3 641.1 L543.9 642.4 L540.5 643.7 L536.9 645.0 L533.3 646.2 L530.4 647.2 L527.4 648.2 L524.3 649.1 L521.1 650.0 L517.9 650.9 L516.4 651.4 L514.7 651.8 L512.8 652.3 L510.8 652.8 L508.6 653.4 L505.7 654.1 L502.6 654.7 L499.5 655.4 L496.2 656.1 L492.9 656.7 L489.4 657.3 L485.8 657.9 L482.1 658.5 L478.3 659.0 L474.5 659.5 L470.3 659.9 L466.2 660.3 L462.0 660.7 L457.8 661.0 L453.5 661.2 L449.3 661.4 L445.0 661.5 L440.8 661.5 L436.7 661.5 L432.6 661.4 L428.4 661.3 L424.1 661.1 L419.9 660.8 L415.6 660.5 L411.2 660.1 L407.3 659.7 L403.5 659.2 L399.8 658.7 L396.2 658.2 L392.7 657.7 L389.9 657.2 L387.1 656.7 L384.6 656.2 L382.3 655.8 L380.1 655.3 L377.9 654.9 L375.9 654.4 L374.0 654.0 L372.3 653.6 L370.8 653.2 L369.7 653.0 L368.9 652.7 L368.1 652.6 L367.6 652.4 L367.2 652.3 L380.1 655.3 L392.5 657.6 L391.2 657.4 L390.0 657.2 L388.9 657.0 L387.9 656.8 L387.0 656.7 L386.1 656.5 L385.4 656.4 L386.4 656.6 L387.4 656.8 L388.6 657.0 L389.7 657.2 L391.0 657.4 L392.3 657.6 L393.7 657.8 L395.1 658.0 L396.5 658.3 L398.0 658.5 L399.6 658.7 L401.2 658.9 L402.9 659.2 L404.6 659.4 L406.3 659.6 L408.1 659.8 L410.0 660.0 L411.8 660.2 L413.7 660.3 L415.6 660.5 L417.6 660.7 L419.6 660.8 L421.6 660.9 L423.6 661.1 L425.7 661.2 L427.8 661.3 L429.9 661.3 L432.0 661.4 L434.1 661.5 L436.2 661.5 L438.3 661.5 L440.4 661.5 L442.5 661.5 L444.7 661.5 L446.8 661.4 L448.9 661.4 L451.0 661.3 L453.1 661.2 L455.1 661.1 L457.2 661.0 L459.2 660.9 L461.2 660.8 L463.2 660.6 L465.1 660.4 L467.0 660.3 L468.9 660.1 L470.8 659.9 L472.6 659.7 L474.4 659.5 L476.1 659.3 L477.8 659.1 L479.4 658.9 L481.0 658.6 L482.6 658.4 L484.1 658.2 L485.5 658.0 L486.9 657.7 L488.2 657.5 L489.5 657.3 L490.7 657.1 L491.9 656.9 L493.0 656.7 L494.0 656.5 L495.0 656.3 L495.9 656.1 L496.8 656.0 L497.6 655.8 L498.3 655.6 L499.0 655.5 L499.6 655.4 L500.1 655.3 L500.5 655.2 L500.9 655.1 L501.2 655.0 L501.5 655.0 L501.6 655.0 L501.7 654.9 L501.8 654.9 L501.7 654.9 L501.6 655.0 L501.4 655.0 L501.1 655.1 L500.8 655.1 L500.4 655.2 L499.9 655.3 L499.4 655.4 L498.7 655.6 L498.0 655.7 L497.3 655.9 L496.4 656.0 L493.9 647.8 L492.9 648.0 L491.9 648.2 L490.8 648.3 L489.7 648.5 L488.4 648.6 L487.1 648.8 L485.8 648.9 L484.4 649.1 L482.9 649.2 L481.3 649.4 L479.7 649.5 L478.1 649.6 L476.4 649.7 L474.6 649.8 L472.8 650.0 L471.0 650.1 L469.1 650.2 L467.1 650.2 L465.2 650.3 L463.2 650.4 L461.1 650.5 L459.1 650.5 L457.0 650.6 L454.8 650.7 L452.7 650.7 L450.5 650.7 L448.4 650.8 L446.2 650.8 L444.0 650.8 L441.8 650.8 L439.6 650.8 L437.4 650.8 L435.2 650.8 L433.0 650.8 L430.8 650.8 L428.6 650.7 L426.4 650.7 L424.3 650.6 L422.2 650.6 L420.1 650.5 L418.1 650.5 L416.0 650.4 L414.0 650.3 L412.1 650.2 L410.2 650.1 L408.3 650.0 L406.5 649.9 L404.7 649.8 L402.9 649.7 L401.2 649.6 L399.6 649.4 L398.0 649.3 L396.5 649.2 L395.1 649.0 L393.7 648.9 L392.3 648.7 L391.1 648.6 L389.9 648.4 L388.7 648.3 L387.7 648.1 L386.7 647.9 L385.7 647.8 L383.2 656.0 L382.4 655.8 L381.7 655.6 L381.0 655.5 L380.4 655.4 L379.9 655.3 L379.4 655.2 L379.1 655.1 L378.7 655.0 L378.5 655.0 L378.4 654.9 L378.3 654.9 L378.2 654.9 L378.3 654.9 L378.4 655.0 L378.6 655.0 L378.9 655.1 L379.2 655.1 L379.6 655.2 L380.1 655.3 L380.7 655.4 L381.3 655.6 L382.0 655.7 L382.7 655.9 L383.5 656.0 L384.4 656.2Z" fill="#fbfcfd" filter="url(#b1)"/>
</g>
</svg>
  <!-- zoom controls -->
  <div class="abs" style="left:13px;top:9px;width:23px;height:70px;border-radius:3px;background:#dde0e7;overflow:hidden">
    <div class="abs" style="left:0;top:23px;width:23px;height:1px;background:#c3c7cf"></div>
    <div class="abs" style="left:0;top:47px;width:23px;height:1px;background:#c3c7cf"></div>
    <svg class="abs" style="left:0;top:0" width="23" height="70" viewBox="0 0 23 70">
      <path d="M7.300 11.600h8.400M11.500 7.400v8.400" stroke="#333" stroke-width="2.300" stroke-linecap="round" fill="none"/>
      <path d="M7.300 35.400h8.400" stroke="#333" stroke-width="2.300" stroke-linecap="round" fill="none"/>
      <path d="M11.5 52.5l3 6.2h-6z" fill="#333"/>
      <path d="M11.5 65.5l3 -5.6h-6z" fill="#b5b9c0"/>
    </svg>
  </div>
  <div class="circ" style="left:6px;top:87.600px;height:35.600px">
    <svg class="abs" style="left:11.200px;top:9.500px" width="14.400" height="14.400" viewBox="0 0 15 15"><path d="M1.50 1.50h1.45v1.45h-1.45zM1.50 4.28h1.45v1.45h-1.45zM1.50 7.06h1.45v1.45h-1.45zM1.50 9.84h1.45v1.45h-1.45zM1.50 12.62h1.45v1.45h-1.45zM4.28 1.50h1.45v1.45h-1.45zM4.28 12.62h1.45v1.45h-1.45zM7.06 1.50h1.45v1.45h-1.45zM7.06 12.62h1.45v1.45h-1.45zM9.84 1.50h1.45v1.45h-1.45zM12.62 1.50h1.45v1.45h-1.45zM12.62 4.28h1.45v1.45h-1.45zM12.62 7.06h1.45v1.45h-1.45z" fill="#1c1c1c"/><path d="M9.54 9.54h4.300l-1.400 1.400 1.700 1.700-1.200 1.200-1.700-1.700-1.400 1.400z" fill="#1c1c1c"/></svg>
  </div>
  <!-- right buttons -->
  <div class="circ" style="left:839px;top:24.5px">
    <svg class="abs" style="left:10px;top:10px" width="16" height="16" viewBox="0 0 24 24"><path d="M3 18h18v-2H3v2zm0-5h18v-2H3v2zm0-7v2h18V6H3z" fill="#1a1a1a"/></svg>
  </div>
  <div class="circ" style="left:839px;top:77px">
    <svg class="abs" style="left:9.500px;top:9.500px" width="17" height="17" viewBox="0 0 24 24"><path d="M10 16.5l6-4.5-6-4.5v9zM12 2C6.48 2 2 6.48 2 12s4.480 10 10 10 10-4.48 10-10S17.52 2 12 2zm0 18c-4.41 0-8-3.59-8-8s3.59-8 8-8 8 3.59 8 8-3.59 8-8 8z" fill="#1a1a1a"/></svg>
  </div>
  <!-- search location -->
  <div class="abs" style="left:8px;top:673px;width:224px;height:32px;background:rgba(255,255,255,.5)">
    <svg class="abs" style="left:10px;top:7px" width="18" height="18" viewBox="0 0 24 24"><path d="M15.5 14h-.79l-.28-.27C15.410 12.590 16 11.110 16 9.500 16 5.910 13.090 3 9.500 3S3 5.910 3 9.500 5.910 16 9.500 16c1.610 0 3.090-.59 4.230-1.570l.27.28v.79l5 4.990L20.490 19l-4.990-5zm-6 0C7.010 14 5 11.990 5 9.500S7.010 5 9.500 5 14 7.010 14 9.500 11.990 14 9.500 14z" fill="#c6c2ba"/></svg>
    <div class="abs" style="left:36px;top:0;line-height:32px;font-size:11.200px;color:#66707f;white-space:nowrap">Search location</div>
  </div>
  <!-- coords -->
  <div class="abs" style="left:8px;top:712.700px;width:170px;height:17.100px;background:#d7dce5;border:1px solid #2c3036;border-top:none;font-size:8.200px;color:#454a54;line-height:16.500px;padding-left:4px;white-space:nowrap">Lng: 14.91159 | Lat: -18.21544 | Zoom: 2.00</div>
  <!-- scale -->
  <div class="abs" style="left:817.400px;top:712.700px;width:57.200px;height:17.100px;background:#cbd1da;border:1px solid #2c3036;border-top:none;font-size:8px;color:#5b6068;line-height:16px;padding-left:4.700px;white-space:nowrap">1,000 km</div>
</div>

<div id="appbar">
<svg class="abs" style="left:300px;top:0" width="180" height="50" viewBox="0 0 180 50">
<defs><linearGradient id="cg" x1="0.3" y1="0" x2="0.45" y2="1"><stop offset="0" stop-color="#86b6e8"/><stop offset="0.45" stop-color="#4f8fd6"/><stop offset="1" stop-color="#2c61ad"/></linearGradient></defs>
<circle cx="28.25" cy="23.55" r="20.45" fill="url(#cg)"/><circle cx="32.5" cy="24.75" r="18.0" fill="#865e41"/>
<text x="25.3" y="36.5" font-family="Liberation Sans, sans-serif" font-size="20" fill="#fff" stroke="#865e41" stroke-width="0.35" textLength="101.5" lengthAdjust="spacingAndGlyphs">opernicus</text>
<circle cx="83" cy="28.4" r="3.1" fill="#f6c21c"/>
<text x="132.3" y="36.5" font-family="Liberation Sans, sans-serif" font-size="18.2" fill="#fff" stroke="#865e41" stroke-width="0.3" textLength="35" lengthAdjust="spacingAndGlyphs">LAC</text>
<text x="133" y="45.7" font-family="Liberation Sans, sans-serif" font-size="7.8" fill="#f2ece6" textLength="34" lengthAdjust="spacingAndGlyphs">PANAMÁ</text>
<g font-family="Liberation Sans, sans-serif" font-size="10.8" font-weight="bold" fill="#5a9ade" stroke="#9cc4ee" stroke-width="0.3">
<text x="100.5" y="16.6" textLength="13" lengthAdjust="spacingAndGlyphs">Ge</text>
<text x="124.8" y="16.6" textLength="41" lengthAdjust="spacingAndGlyphs">Browser</text></g>
<circle cx="119.4" cy="12.7" r="4.5" fill="#2d62b0" stroke="#b9d6f4" stroke-width=".7"/>
<path d="M116.800 11.200c.7-1.300 2.200-1.700 3.300-1.200.3.700-.5 1.200-.4 1.900.2.800 1.300.7 1.500 1.500.1.900-.9 1.300-1.300 2-1 .1-1.300-.9-1.500-1.700-.5-.7-1.500-1.200-1.600-2.500zM121.300 10.300c.8.200 1.500 1 1.600 1.900-.6 0-1.200-.4-1.400-1z" fill="#cfe3f7"/>
</svg>
  <div class="abs" style="left:478px;top:0;line-height:62px;height:49px;font-size:11px;font-weight:bold;color:#fff;white-space:nowrap">Geohazards</div>
  <svg class="abs" style="left:840px;top:13px" width="24" height="24" viewBox="0 0 24 24"><path d="M12 2C6.48 2 2 6.48 2 12s4.480 10 10 10 10-4.48 10-10S17.520 2 12 2zm0 3c1.660 0 3 1.340 3 3s-1.340 3-3 3-3-1.340-3-3 1.340-3 3-3zm0 14.200c-2.500 0-4.710-1.280-6-3.220.03-1.990 4-3.080 6-3.080 1.990 0 5.970 1.090 6 3.080-1.290 1.940-3.500 3.220-6 3.220z" fill="#fff"/></svg>
</div>

<div id="left">
  <div class="hdr"><svg class="abs" style="left:324px;top:16px" width="16" height="16" viewBox="0 0 24 24"><path d="M15.410 7.410 14 6l-6 6 6 6 1.410-1.410L10.830 12z" fill="#555"/></svg></div>
  <div class="tabs">
    <div class="tab sel" style="left:14px">SEARCH</div>
    <div class="tab" style="left:84px">RESULTS</div>
    <div class="tab" style="left:158px">DETAILS</div>
    <div class="ind"></div>
  </div>
<div class="row" style="top:98.5px"><svg width="14" height="14" viewBox="0 0 24 24"><path d="M8.590 16.590 13.170 12 8.590 7.410 10 6l6 6-6 6z" fill="#222"/></svg><span>Sentinel-1</span></div>
<div class="row" style="top:121.5px"><svg width="14" height="14" viewBox="0 0 24 24"><path d="M8.590 16.590 13.170 12 8.590 7.410 10 6l6 6-6 6z" fill="#222"/></svg><span>Sentinel-2</span></div>
<div class="row" style="top:143.5px"><svg width="14" height="14" viewBox="0 0 24 24"><path d="M8.590 16.590 13.170 12 8.590 7.410 10 6l6 6-6 6z" fill="#222"/></svg><span>Sentinel-3</span></div>
<div class="row" style="top:166.5px"><svg width="14" height="14" viewBox="0 0 24 24"><path d="M8.590 16.590 13.170 12 8.590 7.410 10 6l6 6-6 6z" fill="#222"/></svg><span>DEMs</span></div>
<div class="row" style="top:189.5px"><svg width="14" height="14" viewBox="0 0 24 24"><path d="M8.590 16.590 13.170 12 8.590 7.410 10 6l6 6-6 6z" fill="#222"/></svg><span>Land Use / Land Cover</span></div>
<div class="row" style="top:212.5px"><svg width="14" height="14" viewBox="0 0 24 24"><path d="M8.590 16.590 13.170 12 8.590 7.410 10 6l6 6-6 6z" fill="#222"/></svg><span>Local Collections</span></div>
<div class="row" style="top:235.5px"><svg width="14" height="14" viewBox="0 0 24 24"><path d="M8.590 16.590 13.170 12 8.590 7.410 10 6l6 6-6 6z" fill="#222"/></svg><span>Federated Collections</span></div>

  <div class="abs" style="left:6px;top:258px;width:339px;height:1px;background:#e0e0e0"></div>
  <div class="fld" style="left:6px;top:278px;width:160px;height:30px;line-height:28px"><span>Start date</span>
    <svg class="abs" style="left:133.600px;top:5.800px" width="16" height="16" viewBox="0 0 24 24"><path d="M17 12h-5v5h5v-5zM16 1v2H8V1H6v2H5c-1.110 0-1.990.9-1.990 2L3 19c0 1.100.89 2 2 2h14c1.100 0 2-.9 2-2V5c0-1.100-.9-2-2-2h-1V1h-2zm3 18H5V8h14v11z" fill="#6a6a6a"/></svg></div>
  <div class="fld" style="left:185px;top:278px;width:160px;height:30px;line-height:28px"><span>End date</span>
    <svg class="abs" style="left:133.600px;top:5.800px" width="16" height="16" viewBox="0 0 24 24"><path d="M17 12h-5v5h5v-5zM16 1v2H8V1H6v2H5c-1.110 0-1.990.9-1.990 2L3 19c0 1.100.89 2 2 2h14c1.100 0 2-.9 2-2V5c0-1.100-.9-2-2-2h-1V1h-2zm3 18H5V8h14v11z" fill="#6a6a6a"/></svg></div>
  <div class="fld" style="left:6px;top:327px;width:339px;height:29px">
    <svg class="abs" style="left:18.2px;top:7.4px" width="14" height="14" viewBox="0 0 15 15"><path d="M1.50 1.50h1.45v1.45h-1.45zM1.50 4.28h1.45v1.45h-1.45zM1.50 7.06h1.45v1.45h-1.45zM1.50 9.84h1.45v1.45h-1.45zM1.50 12.62h1.45v1.45h-1.45zM4.28 1.50h1.45v1.45h-1.45zM4.28 12.62h1.45v1.45h-1.45zM7.06 1.50h1.45v1.45h-1.45zM7.06 12.62h1.45v1.45h-1.45zM9.84 1.50h1.45v1.45h-1.45zM12.62 1.50h1.45v1.45h-1.45zM12.62 4.28h1.45v1.45h-1.45zM12.62 7.06h1.45v1.45h-1.45z" fill="#5e5e5e"/><path d="M9.54 9.54h4.300l-1.400 1.400 1.700 1.700-1.200 1.200-1.700-1.700-1.400 1.400z" fill="#5e5e5e"/></svg>
  </div>
  <div class="abs" style="left:14.500px;top:320.500px;height:10px;padding:0 2.500px;background:#fff;font-size:8.200px;line-height:10px;color:#8a8a8a">Spatial</div>
  <div class="fld" style="left:6px;top:376px;width:339px;height:29px;line-height:27px"><span>Item ID</span></div>

  <div class="abs" style="left:0;top:730px;width:354px;height:1px;background:#ebebeb"></div><div class="abs" style="left:0;top:783px;width:5px;height:4px;background:#b89a52"></div><div class="abs" style="left:0;top:777px;width:10px;height:10px;background:#fff;border-bottom-left-radius:5px"></div>
  <div class="btn" style="left:116px;top:746px;width:68px;height:26.500px;line-height:25px;background:#e0e0e0;color:#a6a6a6">SEARCH</div>
  <div class="btn" style="left:287px;top:746px;width:52px;height:23px;line-height:21px;border:1px solid #9bbce8;color:#367bd2;background:#fff;font-size:9.500px">RESET</div>
</div>

<div id="dlg">
  <div class="bar">
    <div class="abs" style="left:4px;top:0;line-height:24px;font-size:10.700px;font-weight:bold;color:#fff;letter-spacing:-0.250px">Processing</div>
    <svg class="abs" style="left:388px;top:7px" width="14" height="14" viewBox="0 0 14 14"><circle cx="7" cy="7" r="7" fill="#e0e0e0"/><path d="M4 4l6 6M10 4l-6 6" stroke="#2f6fcb" stroke-width="1.500"/></svg>
  </div>
  <div class="tabsbg">
    <div class="tab sel" style="left:12.500px;color:#367bd2;line-height:40px">SERVICES</div>
    <div class="tab" style="left:99px;color:#555;line-height:40px">JOBS</div>
    <div class="abs" style="left:0;top:37px;width:76px;height:2px;background:#2f6fcb"></div>
    <svg class="abs" style="left:379px;top:11px" width="17" height="17" viewBox="0 0 24 24"><path d="M3.900 12c0-1.710 1.390-3.100 3.100-3.100h4V7H7c-2.760 0-5 2.240-5 5s2.240 5 5 5h4v-1.900H7c-1.710 0-3.100-1.390-3.100-3.100zM8 13h8v-2H8v2zm9-6h-4v1.900h4c1.710 0 3.100 1.390 3.100 3.100s-1.390 3.100-3.100 3.100h-4V17h4c2.760 0 5-2.240 5-5s-2.240-5-5-5z" fill="#555"/></svg>
  </div>
  <svg class="abs" style="left:8px;top:76px" width="5" height="8" viewBox="0 0 5 8"><path d="M4.200.8v6.400L.8 4z" fill="#367bd2"/></svg>
  <div class="abs" style="left:25.500px;top:63px;line-height:34px;font-size:10px;color:#367bd2;white-space:nowrap;letter-spacing:0.030px">BACK TO ALL SERVICES</div>
<div class="abs" style="left:0;top:97px;width:410px;height:120px;overflow:hidden;background:linear-gradient(180deg,#11449a 0%,#0d357f 40%,#0a2564 72%,#091f59 100%)">
<svg class="abs" style="left:0;top:0" width="410" height="120" viewBox="0 0 410 120">
<defs><radialGradient id="bg1" cx="0.6" cy="0.15" r="0.75"><stop offset="0" stop-color="#1b58bd" stop-opacity=".75"/><stop offset="1" stop-color="#0a2566" stop-opacity="0"/></radialGradient></defs>
<rect width="410" height="120" fill="url(#bg1)"/>
<path d="M-2.5 82.9 L-13.0 101.1 L-34.0 101.1 L-44.5 82.9 L-34.0 64.7 L-13.0 64.7Z" fill="#071a4a" fill-opacity="0.05" stroke="#2f6fd0" stroke-opacity="0.32" stroke-width="0.8"/><path d="M-2.5 119.3 L-13.0 137.5 L-34.0 137.5 L-44.5 119.3 L-34.0 101.1 L-13.0 101.1Z" fill="#071a4a" fill-opacity="0.02" stroke="#2f6fd0" stroke-opacity="0.20" stroke-width="0.8"/><path d="M29.0 101.1 L18.5 119.3 L-2.5 119.3 L-13.0 101.1 L-2.5 82.9 L18.5 82.9Z" fill="#071a4a" fill-opacity="0.34" stroke="#2f6fd0" stroke-opacity="0.19" stroke-width="0.8"/><path d="M60.5 82.9 L50.0 101.1 L29.0 101.1 L18.5 82.9 L29.0 64.7 L50.0 64.7Z" fill="#071a4a" fill-opacity="0.20" stroke="#2f6fd0" stroke-opacity="0.32" stroke-width="0.8"/><path d="M60.5 119.3 L50.0 137.5 L29.0 137.5 L18.5 119.3 L29.0 101.1 L50.0 101.1Z" fill="#071a4a" fill-opacity="0.11" stroke="#2f6fd0" stroke-opacity="0.31" stroke-width="0.8"/><path d="M123.5 119.3 L113.0 137.5 L92.0 137.5 L81.5 119.3 L92.0 101.1 L113.0 101.1Z" fill="#071a4a" fill-opacity="0.34" stroke="#2f6fd0" stroke-opacity="0.21" stroke-width="0.8"/><path d="M186.5 119.3 L176.0 137.5 L155.0 137.5 L144.5 119.3 L155.0 101.1 L176.0 101.1Z" fill="#071a4a" fill-opacity="0.24" stroke="#2f6fd0" stroke-opacity="0.31" stroke-width="0.8"/><path d="M218.0 64.7 L207.5 82.9 L186.5 82.9 L176.0 64.7 L186.5 46.6 L207.5 46.6Z" fill="#071a4a" fill-opacity="0.25" stroke="#2f6fd0" stroke-opacity="0.32" stroke-width="0.8"/><path d="M249.5 82.9 L239.0 101.1 L218.0 101.1 L207.5 82.9 L218.0 64.7 L239.0 64.7Z" fill="#071a4a" fill-opacity="0.04" stroke="#2f6fd0" stroke-opacity="0.19" stroke-width="0.8"/><path d="M249.5 119.3 L239.0 137.5 L218.0 137.5 L207.5 119.3 L218.0 101.1 L239.0 101.1Z" fill="#071a4a" fill-opacity="0.19" stroke="#2f6fd0" stroke-opacity="0.37" stroke-width="0.8"/><path d="M281.0 101.1 L270.5 119.3 L249.5 119.3 L239.0 101.1 L249.5 82.9 L270.5 82.9Z" fill="#071a4a" fill-opacity="0.06" stroke="#2f6fd0" stroke-opacity="0.23" stroke-width="0.8"/><path d="M312.5 82.9 L302.0 101.1 L281.0 101.1 L270.5 82.9 L281.0 64.7 L302.0 64.7Z" fill="#071a4a" fill-opacity="0.20" stroke="#2f6fd0" stroke-opacity="0.39" stroke-width="0.8"/><path d="M375.5 82.9 L365.0 101.1 L344.0 101.1 L333.5 82.9 L344.0 64.7 L365.0 64.7Z" fill="#071a4a" fill-opacity="0.14" stroke="#2f6fd0" stroke-opacity="0.20" stroke-width="0.8"/><path d="M375.5 119.3 L365.0 137.5 L344.0 137.5 L333.5 119.3 L344.0 101.1 L365.0 101.1Z" fill="#071a4a" fill-opacity="0.00" stroke="#2f6fd0" stroke-opacity="0.21" stroke-width="0.8"/><path d="M407.0 64.7 L396.5 82.9 L375.5 82.9 L365.0 64.7 L375.5 46.6 L396.5 46.6Z" fill="#071a4a" fill-opacity="0.12" stroke="#2f6fd0" stroke-opacity="0.26" stroke-width="0.8"/><path d="M407.0 101.1 L396.5 119.3 L375.5 119.3 L365.0 101.1 L375.5 82.9 L396.5 82.9Z" fill="#071a4a" fill-opacity="0.12" stroke="#2f6fd0" stroke-opacity="0.24" stroke-width="0.8"/><path d="M438.5 119.3 L428.0 137.5 L407.0 137.5 L396.5 119.3 L407.0 101.1 L428.0 101.1Z" fill="#071a4a" fill-opacity="0.18" stroke="#2f6fd0" stroke-opacity="0.40" stroke-width="0.8"/><circle cx="-2.5" cy="82.9" r="1.1" fill="#3d8bff" fill-opacity=".7"/><circle cx="-34.0" cy="101.1" r="1.1" fill="#3d8bff" fill-opacity=".7"/><circle cx="-44.5" cy="82.9" r="1.1" fill="#3d8bff" fill-opacity=".7"/><circle cx="-13.0" cy="64.7" r="1.1" fill="#3d8bff" fill-opacity=".7"/><circle cx="-34.0" cy="137.5" r="1.1" fill="#3d8bff" fill-opacity=".7"/><circle cx="-44.5" cy="119.3" r="1.1" fill="#3d8bff" fill-opacity=".7"/><circle cx="18.5" cy="119.3" r="1.1" fill="#3d8bff" fill-opacity=".7"/><circle cx="-2.5" cy="119.3" r="1.1" fill="#3d8bff" fill-opacity=".7"/><circle cx="-13.0" cy="101.1" r="1.1" fill="#3d8bff" fill-opacity=".7"/><circle cx="-2.5" cy="82.9" r="1.1" fill="#3d8bff" fill-opacity=".7"/><circle cx="60.5" cy="82.9" r="1.1" fill="#3d8bff" fill-opacity=".7"/><circle cx="29.0" cy="101.1" r="1.1" fill="#3d8bff" fill-opacity=".7"/><circle cx="18.5" cy="82.9" r="1.1" fill="#3d8bff" fill-opacity=".7"/><circle cx="29.0" cy="64.7" r="1.1" fill="#3d8bff" fill-opacity=".7"/><circle cx="50.0" cy="137.5" r="1.1" fill="#3d8bff" fill-opacity=".7"/><circle cx="29.0" cy="101.1" r="1.1" fill="#3d8bff" fill-opacity=".7"/><circle cx="92.0" cy="137.5" r="1.1" fill="#3d8bff" fill-opacity=".7"/><circle cx="92.0" cy="101.1" r="1.1" fill="#3d8bff" fill-opacity=".7"/><circle cx="186.5" cy="82.9" r="1.1" fill="#3d8bff" fill-opacity=".7"/><circle cx="176.0" cy="64.7" r="1.1" fill="#3d8bff" fill-opacity=".7"/><circle cx="207.5" cy="46.6" r="1.1" fill="#3d8bff" fill-opacity=".7"/><circle cx="239.0" cy="101.1" r="1.1" fill="#3d8bff" fill-opacity=".7"/><circle cx="218.0" cy="101.1" r="1.1" fill="#3d8bff" fill-opacity=".7"/><circle cx="207.5" cy="82.9" r="1.1" fill="#3d8bff" fill-opacity=".7"/><circle cx="239.0" cy="64.7" r="1.1" fill="#3d8bff" fill-opacity=".7"/><circle cx="218.0" cy="137.5" r="1.1" fill="#3d8bff" fill-opacity=".7"/><circle cx="218.0" cy="101.1" r="1.1" fill="#3d8bff" fill-opacity=".7"/><circle cx="281.0" cy="101.1" r="1.1" fill="#3d8bff" fill-opacity=".7"/><circle cx="239.0" cy="101.1" r="1.1" fill="#3d8bff" fill-opacity=".7"/><circle cx="249.5" cy="82.9" r="1.1" fill="#3d8bff" fill-opacity=".7"/><circle cx="281.0" cy="64.7" r="1.1" fill="#3d8bff" fill-opacity=".7"/><circle cx="365.0" cy="101.1" r="1.1" fill="#3d8bff" fill-opacity=".7"/><circle cx="344.0" cy="101.1" r="1.1" fill="#3d8bff" fill-opacity=".7"/><circle cx="333.5" cy="82.9" r="1.1" fill="#3d8bff" fill-opacity=".7"/><circle cx="344.0" cy="64.7" r="1.1" fill="#3d8bff" fill-opacity=".7"/><circle cx="365.0" cy="64.7" r="1.1" fill="#3d8bff" fill-opacity=".7"/><circle cx="375.5" cy="119.3" r="1.1" fill="#3d8bff" fill-opacity=".7"/><circle cx="365.0" cy="137.5" r="1.1" fill="#3d8bff" fill-opacity=".7"/><circle cx="344.0" cy="137.5" r="1.1" fill="#3d8bff" fill-opacity=".7"/><circle cx="365.0" cy="101.1" r="1.1" fill="#3d8bff" fill-opacity=".7"/><circle cx="407.0" cy="64.7" r="1.1" fill="#3d8bff" fill-opacity=".7"/><circle cx="396.5" cy="46.6" r="1.1" fill="#3d8bff" fill-opacity=".7"/><circle cx="396.5" cy="119.3" r="1.1" fill="#3d8bff" fill-opacity=".7"/><circle cx="375.5" cy="119.3" r="1.1" fill="#3d8bff" fill-opacity=".7"/><circle cx="396.5" cy="82.9" r="1.1" fill="#3d8bff" fill-opacity=".7"/><circle cx="407.0" cy="137.5" r="1.1" fill="#3d8bff" fill-opacity=".7"/><circle cx="396.5" cy="119.3" r="1.1" fill="#3d8bff" fill-opacity=".7"/><circle cx="407.0" cy="101.1" r="1.1" fill="#3d8bff" fill-opacity=".7"/><circle cx="218.0" cy="92.4" r="0.9" fill="#3b86ff" fill-opacity="0.39"/><circle cx="250.3" cy="93.5" r="0.7" fill="#3b86ff" fill-opacity="0.44"/><circle cx="332.3" cy="87.8" r="0.7" fill="#3b86ff" fill-opacity="0.26"/><circle cx="202.1" cy="86.8" r="0.7" fill="#3b86ff" fill-opacity="0.44"/><circle cx="193.9" cy="24.5" r="1.2" fill="#3b86ff" fill-opacity="0.49"/><circle cx="183.9" cy="110.7" r="0.9" fill="#3b86ff" fill-opacity="0.49"/><circle cx="150.9" cy="27.6" r="0.7" fill="#3b86ff" fill-opacity="0.34"/><circle cx="140.1" cy="58.0" r="1.2" fill="#3b86ff" fill-opacity="0.45"/><circle cx="196.8" cy="77.7" r="1.2" fill="#3b86ff" fill-opacity="0.23"/><circle cx="269.2" cy="107.5" r="1.2" fill="#3b86ff" fill-opacity="0.43"/><circle cx="196.2" cy="22.7" r="1.2" fill="#3b86ff" fill-opacity="0.30"/><circle cx="325.3" cy="114.7" r="0.9" fill="#3b86ff" fill-opacity="0.34"/><circle cx="302.3" cy="11.9" r="0.7" fill="#3b86ff" fill-opacity="0.25"/><circle cx="55.8" cy="19.5" r="0.9" fill="#3b86ff" fill-opacity="0.44"/>
<circle cx="216" cy="87" r="5.5" fill="none" stroke="#4b86e0" stroke-opacity=".6" stroke-width=".8"/><path d="M210.500 87h11M216 81.500v11M212 83.500c2.500 1.500 5.500 1.500 8 0M212 90.500c2.500-1.500 5.500-1.500 8 0" fill="none" stroke="#4b86e0" stroke-opacity=".6" stroke-width=".6"/><ellipse cx="216" cy="87" rx="2.600" ry="5.500" fill="none" stroke="#4b86e0" stroke-opacity=".6" stroke-width=".6"/>
</svg>
<div class="abs" style="left:8px;top:8px;width:394px;height:64px;border-radius:2px;background:rgba(244,244,246,.78)"></div>
<div class="abs" style="left:12px;top:8.3px;font-size:13.9px;line-height:15px;font-weight:bold;color:#367bd2;white-space:nowrap">kinesIS Surface Motion 3D Decomposition</div>
<div class="abs" style="left:12px;top:29.5px;font-size:11px;line-height:12px;color:#111;white-space:nowrap;letter-spacing:0.1px">The kinesIS 3Decomp service supports the 3D geometric decomposition of<br>ascending and descending surface motion measurements into actual vertical<br>(up-down) and horizontal (east-west) motion components.</div>
<div class="abs" style="left:329px;top:101px;width:81px;height:19px;background:#367bd2;border-top-left-radius:4px">
<svg class="abs" style="left:2.300px;top:2.200px" width="14.600" height="14.600" viewBox="0 0 24 24"><path d="M12 2C6.480 2 2 6.480 2 12s4.480 10 10 10 10-4.480 10-10S17.520 2 12 2zm1 15h-2v-6h2v6zm0-8h-2V7h2v2z" fill="#fff"/></svg>
<div class="abs" style="left:20.5px;top:0;line-height:19px;font-size:9.1px;color:#fff;white-space:nowrap">Version 0.3.1</div>
</div>
</div>
  <div class="chip" style="left:8px;width:116px">process:decomposition3d</div>
  <div class="chip" style="left:127px;width:155px">process-id:decomposition3d-v0-3-1</div>
  <div class="chip" style="left:286px;width:106px">workspace:geohazards</div>

  <svg class="abs" style="left:8px;top:254.500px" width="16.500" height="16.500" viewBox="0 0 24 24"><path d="M21 3.010H3c-1.100 0-2 .9-2 2V9h2V4.990h18v14.030H3V15H1v4.010c0 1.100.9 1.980 2 1.980h18c1.100 0 2-.88 2-1.980v-14c0-1.110-.9-2-2-2zM11 16l4-4-4-4v3H1v2h10v3z" fill="#222"/></svg>
  <div class="abs" style="left:30.500px;top:252px;line-height:20px;font-size:13.900px;color:#222">Inputs</div>

  <div class="av" style="top:291px">ref</div>
  <div class="pri" style="top:294px">Ascending LoS velocity</div>
  <div class="sec" style="top:308px">Path to ascending LoS velocity GeoTIFF raster</div>
  <div class="av" style="top:344px">ref</div>
  <div class="pri" style="top:345.500px">Descending LoS velocity</div>
  <div class="sec" style="top:361px">Path to descending LoS velocity GeoTIFF raster</div>
  <div class="av" style="top:403px">number</div>
  <div class="pri" style="top:398.500px">Output pixel size</div>
  <div class="sec" style="top:413px">Desired output pixel size (in meters; converted to degrees if EPSG is<br>geographic)</div>

  <div class="abs" style="left:0;top:507px;width:410px;height:1px;background:#f7f7f7"></div>
  <div class="abs" style="left:127px;top:516px;width:156px;height:27px;border:1px solid #9bbce8;border-radius:3px">
    <svg class="abs" style="left:8px;top:4px" width="17" height="17" viewBox="0 0 24 24"><path d="M13 11H4c-1.100 0-2-.9-2-2V6c0-1.100.9-2 2-2h9v7zM4 13h9v7H4c-1.100 0-2-.9-2-2v-3c0-1.100.9-2 2-2zm1 4.500c0 .550.450 1 1 1s1-.450 1-1-.450-1-1-1-1 .450-1 1zM15 4h7l-3 5h3l-5.500 9v-6H15V4zM5 7.500c0 .550.450 1 1 1s1-.450 1-1-.450-1-1-1-1 .450-1 1z" fill="#367bd2"/></svg>
    <div class="abs" style="left:31px;top:-0.700px;line-height:25px;font-size:10px;color:#367bd2;white-space:nowrap;letter-spacing:0.030px">GO TO SERVICE FORM</div>
  </div>
</div>
</body></html>
